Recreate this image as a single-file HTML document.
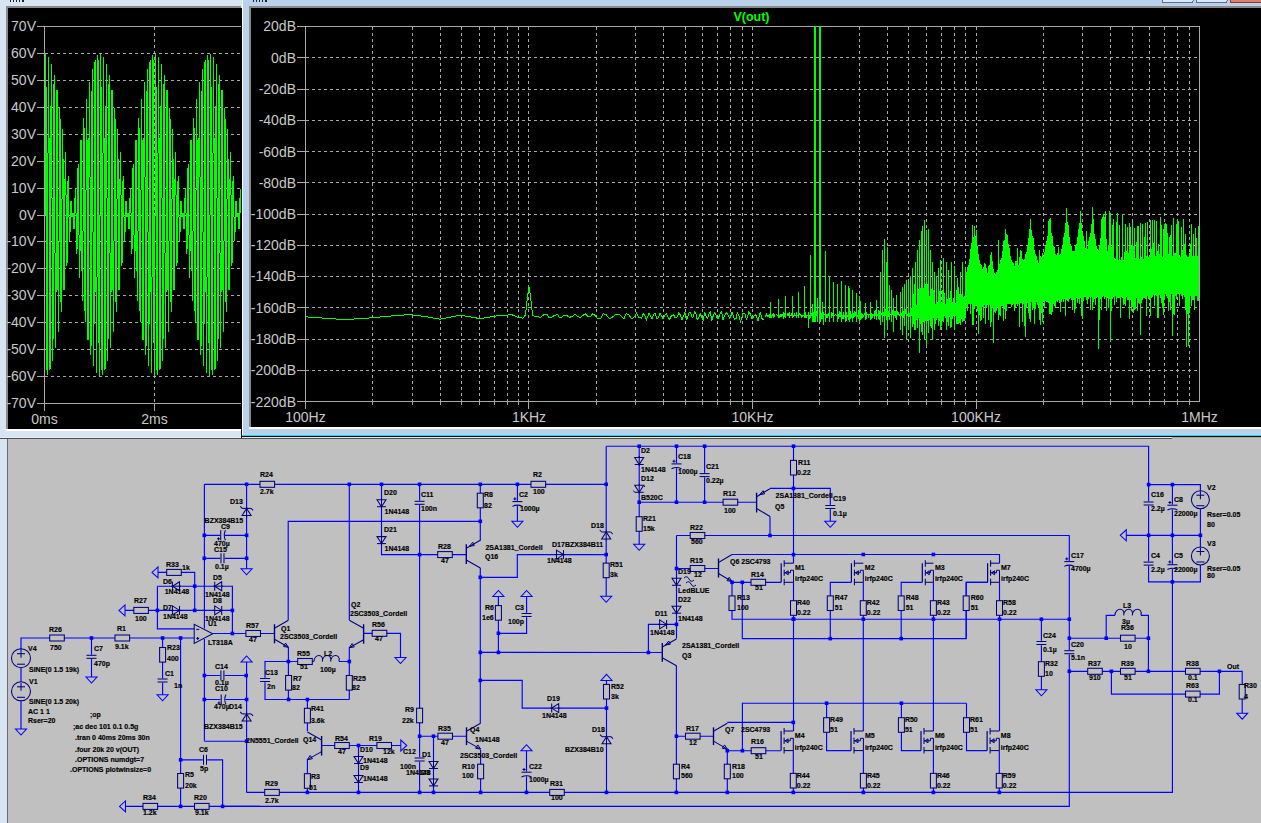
<!DOCTYPE html>
<html><head><meta charset="utf-8"><style>
html,body{margin:0;padding:0;width:1261px;height:823px;overflow:hidden;background:#c0c0c0}
svg{display:block}
.ax{font-family:"Liberation Sans",sans-serif;font-size:14px;fill:#c8c8c8}
.ttl{font-family:"Liberation Sans",sans-serif;font-size:12.5px;font-weight:bold;fill:#00ff00}
.s{font-family:"Liberation Sans",sans-serif;font-size:7px;font-weight:bold;fill:#000;stroke:#000;stroke-width:0.15px}
</style></head><body>
<svg width="1261" height="823" viewBox="0 0 1261 823" shape-rendering="crispEdges">
<defs>
<clipPath id="clipL"><rect x="45" y="8" width="196" height="395"/></clipPath>
<clipPath id="clipR"><rect x="306" y="27" width="893" height="374"/></clipPath>
</defs>
<rect x="0" y="0" width="1261" height="823" fill="#c0c0c0"/><rect x="0" y="0" width="242" height="438" fill="#d7e4f2"/><rect x="6" y="6" width="235" height="2" fill="#8a8a8a"/><rect x="6" y="6" width="2" height="423" fill="#8a8a8a"/><rect x="8" y="8" width="234" height="421" fill="#000"/><rect x="6" y="429" width="236" height="2" fill="#fff"/><rect x="9.5" y="0" width="1.6" height="1.8" fill="#222"/><rect x="12.6" y="0" width="1.6" height="1.8" fill="#222"/><rect x="15.7" y="0" width="1.6" height="1.8" fill="#222"/><rect x="18.8" y="0" width="1.6" height="1.8" fill="#222"/><rect x="21.9" y="0" width="1.6" height="1.8" fill="#222"/><rect x="242" y="0" width="1019" height="436" fill="#b9d1ea"/><rect x="242" y="0" width="1" height="436" fill="#fff"/><rect x="249" y="6" width="1012" height="2" fill="#8a8a8a"/><rect x="249" y="6" width="2" height="421" fill="#8a8a8a"/><rect x="251" y="8" width="1010" height="419" fill="#000"/><rect x="249" y="427" width="1012" height="2" fill="#fff"/><rect x="242" y="435" width="1019" height="1" fill="#2ad3ee"/><rect x="242" y="436" width="1019" height="1" fill="#111"/><rect x="0" y="437" width="1172" height="1" fill="#e6ecf3"/><rect x="0" y="438" width="1172" height="1" fill="#505050"/><rect x="1172" y="437" width="89" height="1" fill="#a8a8a8"/><rect x="241" y="429" width="1" height="9" fill="#111"/><rect x="252.5" y="0" width="1.6" height="1.8" fill="#222"/><rect x="255.6" y="0" width="1.6" height="1.8" fill="#222"/><rect x="258.7" y="0" width="1.6" height="1.8" fill="#222"/><rect x="261.8" y="0" width="1.6" height="1.8" fill="#222"/><rect x="264.9" y="0" width="1.6" height="1.8" fill="#222"/><rect x="1162" y="-6" width="31" height="8.5" rx="2" fill="#dce8f5" stroke="#5a6e88"/><rect x="1196" y="-6" width="31" height="8.5" rx="2" fill="#dce8f5" stroke="#5a6e88"/><rect x="1230" y="-6" width="40" height="8.5" rx="2" fill="#e0806a" stroke="#8a3a2a"/><rect x="0" y="439" width="7" height="384" fill="#d7e4f2"/><rect x="7" y="439" width="1" height="384" fill="#6a6a6a"/>
<g><line x1="37" y1="26.5" x2="241" y2="26.5" stroke="#a8a8a8" stroke-width="1"/><line x1="44.5" y1="26.5" x2="44.5" y2="411" stroke="#a8a8a8" stroke-width="1"/><line x1="37" y1="403.5" x2="241" y2="403.5" stroke="#a8a8a8" stroke-width="1"/><text x="36" y="408" text-anchor="end" class="ax">-70V</text><line x1="37" y1="376.5" x2="44" y2="376.5" stroke="#a8a8a8"/><line x1="45" y1="376.5" x2="241" y2="376.5" stroke="#a8a8a8" stroke-dasharray="3 3"/><text x="36" y="381" text-anchor="end" class="ax">-60V</text><line x1="37" y1="349.5" x2="44" y2="349.5" stroke="#a8a8a8"/><line x1="45" y1="349.5" x2="241" y2="349.5" stroke="#a8a8a8" stroke-dasharray="3 3"/><text x="36" y="354" text-anchor="end" class="ax">-50V</text><line x1="37" y1="322.5" x2="44" y2="322.5" stroke="#a8a8a8"/><line x1="45" y1="322.5" x2="241" y2="322.5" stroke="#a8a8a8" stroke-dasharray="3 3"/><text x="36" y="327" text-anchor="end" class="ax">-40V</text><line x1="37" y1="295.5" x2="44" y2="295.5" stroke="#a8a8a8"/><line x1="45" y1="295.5" x2="241" y2="295.5" stroke="#a8a8a8" stroke-dasharray="3 3"/><text x="36" y="300" text-anchor="end" class="ax">-30V</text><line x1="37" y1="268.5" x2="44" y2="268.5" stroke="#a8a8a8"/><line x1="45" y1="268.5" x2="241" y2="268.5" stroke="#a8a8a8" stroke-dasharray="3 3"/><text x="36" y="273" text-anchor="end" class="ax">-20V</text><line x1="37" y1="241.5" x2="44" y2="241.5" stroke="#a8a8a8"/><line x1="45" y1="241.5" x2="241" y2="241.5" stroke="#a8a8a8" stroke-dasharray="3 3"/><text x="36" y="246" text-anchor="end" class="ax">-10V</text><line x1="37" y1="215.5" x2="44" y2="215.5" stroke="#a8a8a8"/><line x1="45" y1="215.5" x2="241" y2="215.5" stroke="#a8a8a8" stroke-dasharray="3 3"/><text x="36" y="220" text-anchor="end" class="ax">0V</text><line x1="37" y1="188.5" x2="44" y2="188.5" stroke="#a8a8a8"/><line x1="45" y1="188.5" x2="241" y2="188.5" stroke="#a8a8a8" stroke-dasharray="3 3"/><text x="36" y="193" text-anchor="end" class="ax">10V</text><line x1="37" y1="161.5" x2="44" y2="161.5" stroke="#a8a8a8"/><line x1="45" y1="161.5" x2="241" y2="161.5" stroke="#a8a8a8" stroke-dasharray="3 3"/><text x="36" y="166" text-anchor="end" class="ax">20V</text><line x1="37" y1="134.5" x2="44" y2="134.5" stroke="#a8a8a8"/><line x1="45" y1="134.5" x2="241" y2="134.5" stroke="#a8a8a8" stroke-dasharray="3 3"/><text x="36" y="139" text-anchor="end" class="ax">30V</text><line x1="37" y1="107.5" x2="44" y2="107.5" stroke="#a8a8a8"/><line x1="45" y1="107.5" x2="241" y2="107.5" stroke="#a8a8a8" stroke-dasharray="3 3"/><text x="36" y="112" text-anchor="end" class="ax">40V</text><line x1="37" y1="80.5" x2="44" y2="80.5" stroke="#a8a8a8"/><line x1="45" y1="80.5" x2="241" y2="80.5" stroke="#a8a8a8" stroke-dasharray="3 3"/><text x="36" y="85" text-anchor="end" class="ax">50V</text><line x1="37" y1="53.5" x2="44" y2="53.5" stroke="#a8a8a8"/><line x1="45" y1="53.5" x2="241" y2="53.5" stroke="#a8a8a8" stroke-dasharray="3 3"/><text x="36" y="58" text-anchor="end" class="ax">60V</text><text x="36" y="31" text-anchor="end" class="ax">70V</text><line x1="154.5" y1="27" x2="154.5" y2="403" stroke="#a8a8a8" stroke-dasharray="3 3"/><line x1="154.5" y1="403" x2="154.5" y2="411" stroke="#a8a8a8"/><text x="44.5" y="424" text-anchor="middle" class="ax">0ms</text><text x="154.5" y="424" text-anchor="middle" class="ax">2ms</text><path d="M45.5,53.6V215.0M46.5,87.3V370.3M47.5,153.0V375.4M48.5,56.7V153.0M49.5,137.6V370.2M50.5,105.9V368.5M51.5,63.9V198.0M52.5,198.0V361.0M53.5,83.9V339.2M54.5,75.1V253.3M55.5,253.3V348.0M56.5,89.8V291.8M57.5,90.0V290.4M58.5,240.5V331.5M59.5,107.8V240.5M60.5,118.7V302.3M61.5,199.4V312.1M62.5,128.6V199.4M63.5,158.6V290.1M64.5,178.7V290.2M65.5,151.6V195.3M66.5,195.3V266.3M67.5,181.1V262.5M68.5,176.1V216.8M69.5,216.8V241.2M70.5,201.4V232.4M71.5,201.4V217.0M72.5,212.7V217.3M73.5,213.0V228.6M74.5,197.6V228.6M75.5,188.8V213.2M76.5,213.2V253.9M77.5,167.5V248.9M78.5,163.7V234.7M79.5,234.7V278.4M80.5,139.8V251.3M81.5,139.9V271.4M82.5,230.6V301.4M83.5,117.9V230.6M84.5,127.7V311.3M85.5,189.5V322.2M86.5,98.5V189.5M87.5,139.6V340.0M88.5,138.2V340.2M89.5,82.0V176.7M90.5,176.7V354.9M91.5,90.8V346.1M92.5,69.0V232.0M93.5,232.0V366.1M94.5,61.5V324.1M95.5,59.8V292.4M96.5,277.0V373.3M97.5,54.6V277.0M98.5,59.7V342.7M99.5,215.0V376.4M100.5,53.6V215.0M101.5,87.3V370.3M102.5,153.0V375.4M103.5,56.7V153.0M104.5,137.6V370.2M105.5,105.9V368.5M106.5,63.9V198.0M107.5,198.0V361.0M108.5,83.9V339.2M109.5,75.1V253.3M110.5,253.3V348.0M111.5,89.8V291.8M112.5,90.0V290.4M113.5,240.5V331.5M114.5,107.8V240.5M115.5,118.7V302.3M116.5,199.4V312.1M117.5,128.6V199.4M118.5,158.6V290.1M119.5,178.7V290.2M120.5,151.6V195.3M121.5,195.3V266.3M122.5,181.1V262.5M123.5,176.1V216.8M124.5,216.8V241.2M125.5,201.4V232.4M126.5,201.4V217.0M127.5,212.7V217.3M128.5,213.0V228.6M129.5,197.6V228.6M130.5,188.8V213.2M131.5,213.2V253.9M132.5,167.5V248.9M133.5,163.7V234.7M134.5,234.7V278.4M135.5,139.8V251.3M136.5,139.9V271.4M137.5,230.6V301.4M138.5,117.9V230.6M139.5,127.7V311.3M140.5,189.5V322.2M141.5,98.5V189.5M142.5,139.6V340.0M143.5,138.2V340.2M144.5,82.0V176.7M145.5,176.7V354.9M146.5,90.8V346.1M147.5,69.0V232.0M148.5,232.0V366.1M149.5,61.5V324.1M150.5,59.8V292.4M151.5,277.0V373.3M152.5,54.6V277.0M153.5,59.7V342.7M154.5,215.0V376.4M155.5,53.6V215.0M156.5,87.3V370.3M157.5,153.0V375.4M158.5,56.7V153.0M159.5,137.6V370.2M160.5,105.9V368.5M161.5,63.9V198.0M162.5,198.0V361.0M163.5,83.9V339.2M164.5,75.1V253.3M165.5,253.3V348.0M166.5,89.8V291.8M167.5,90.0V290.4M168.5,240.5V331.5M169.5,107.8V240.5M170.5,118.7V302.3M171.5,199.4V312.1M172.5,128.6V199.4M173.5,158.6V290.1M174.5,178.7V290.2M175.5,151.6V195.3M176.5,195.3V266.3M177.5,181.1V262.5M178.5,176.1V216.8M179.5,216.8V241.2M180.5,201.4V232.4M181.5,201.4V217.0M182.5,212.7V217.3M183.5,213.0V228.6M184.5,197.6V228.6M185.5,188.8V213.2M186.5,213.2V253.9M187.5,167.5V248.9M188.5,163.7V234.7M189.5,234.7V278.4M190.5,139.8V251.3M191.5,139.9V271.4M192.5,230.6V301.4M193.5,117.9V230.6M194.5,127.7V311.3M195.5,189.5V322.2M196.5,98.5V189.5M197.5,139.6V340.0M198.5,138.2V340.2M199.5,82.0V176.7M200.5,176.7V354.9M201.5,90.8V346.1M202.5,69.0V232.0M203.5,232.0V366.1M204.5,61.5V324.1M205.5,59.8V292.4M206.5,277.0V373.3M207.5,54.6V277.0M208.5,59.7V342.7M209.5,215.0V376.4M210.5,53.6V215.0M211.5,87.3V370.3M212.5,153.0V375.4M213.5,56.7V153.0M214.5,137.6V370.2M215.5,105.9V368.5M216.5,63.9V198.0M217.5,198.0V361.0M218.5,83.9V339.2M219.5,75.1V253.3M220.5,253.3V348.0M221.5,89.8V291.8M222.5,90.0V290.4M223.5,240.5V331.5M224.5,107.8V240.5M225.5,118.7V302.3M226.5,199.4V312.1M227.5,128.6V199.4M228.5,158.6V290.1M229.5,178.7V290.2M230.5,151.6V195.3M231.5,195.3V266.3M232.5,181.1V262.5M233.5,176.1V216.8M234.5,216.8V241.2M235.5,201.4V232.4M236.5,201.4V217.0M237.5,212.7V217.3M238.5,213.0V228.6M239.5,197.6V228.6M240.5,188.8V213.2M241.5,213.2V253.9" fill="none" stroke="#00ff00" stroke-width="1" clip-path="url(#clipL)"/></g>
<g><line x1="297" y1="26.5" x2="1200" y2="26.5" stroke="#a8a8a8"/><line x1="1199.5" y1="26.5" x2="1199.5" y2="401.5" stroke="#a8a8a8"/><line x1="297" y1="401.5" x2="1200" y2="401.5" stroke="#a8a8a8"/><line x1="305.5" y1="26.5" x2="305.5" y2="409" stroke="#a8a8a8"/><text x="296" y="31" text-anchor="end" class="ax">20dB</text><line x1="297" y1="57.5" x2="305" y2="57.5" stroke="#a8a8a8"/><line x1="306" y1="57.5" x2="1199" y2="57.5" stroke="#a8a8a8" stroke-dasharray="3 3"/><text x="296" y="63" text-anchor="end" class="ax">0dB</text><line x1="297" y1="89.5" x2="305" y2="89.5" stroke="#a8a8a8"/><line x1="306" y1="89.5" x2="1199" y2="89.5" stroke="#a8a8a8" stroke-dasharray="3 3"/><text x="296" y="94" text-anchor="end" class="ax">-20dB</text><line x1="297" y1="120.5" x2="305" y2="120.5" stroke="#a8a8a8"/><line x1="306" y1="120.5" x2="1199" y2="120.5" stroke="#a8a8a8" stroke-dasharray="3 3"/><text x="296" y="125" text-anchor="end" class="ax">-40dB</text><line x1="297" y1="151.5" x2="305" y2="151.5" stroke="#a8a8a8"/><line x1="306" y1="151.5" x2="1199" y2="151.5" stroke="#a8a8a8" stroke-dasharray="3 3"/><text x="296" y="157" text-anchor="end" class="ax">-60dB</text><line x1="297" y1="182.5" x2="305" y2="182.5" stroke="#a8a8a8"/><line x1="306" y1="182.5" x2="1199" y2="182.5" stroke="#a8a8a8" stroke-dasharray="3 3"/><text x="296" y="188" text-anchor="end" class="ax">-80dB</text><line x1="297" y1="214.5" x2="305" y2="214.5" stroke="#a8a8a8"/><line x1="306" y1="214.5" x2="1199" y2="214.5" stroke="#a8a8a8" stroke-dasharray="3 3"/><text x="296" y="219" text-anchor="end" class="ax">-100dB</text><line x1="297" y1="245.5" x2="305" y2="245.5" stroke="#a8a8a8"/><line x1="306" y1="245.5" x2="1199" y2="245.5" stroke="#a8a8a8" stroke-dasharray="3 3"/><text x="296" y="250" text-anchor="end" class="ax">-120dB</text><line x1="297" y1="276.5" x2="305" y2="276.5" stroke="#a8a8a8"/><line x1="306" y1="276.5" x2="1199" y2="276.5" stroke="#a8a8a8" stroke-dasharray="3 3"/><text x="296" y="281" text-anchor="end" class="ax">-140dB</text><line x1="297" y1="307.5" x2="305" y2="307.5" stroke="#a8a8a8"/><line x1="306" y1="307.5" x2="1199" y2="307.5" stroke="#a8a8a8" stroke-dasharray="3 3"/><text x="296" y="313" text-anchor="end" class="ax">-160dB</text><line x1="297" y1="339.5" x2="305" y2="339.5" stroke="#a8a8a8"/><line x1="306" y1="339.5" x2="1199" y2="339.5" stroke="#a8a8a8" stroke-dasharray="3 3"/><text x="296" y="344" text-anchor="end" class="ax">-180dB</text><line x1="297" y1="370.5" x2="305" y2="370.5" stroke="#a8a8a8"/><line x1="306" y1="370.5" x2="1199" y2="370.5" stroke="#a8a8a8" stroke-dasharray="3 3"/><text x="296" y="375" text-anchor="end" class="ax">-200dB</text><text x="296" y="407" text-anchor="end" class="ax">-220dB</text><line x1="372.5" y1="27" x2="372.5" y2="401" stroke="#a8a8a8" stroke-dasharray="3 3"/><line x1="372.5" y1="401" x2="372.5" y2="405" stroke="#a8a8a8"/><line x1="412.5" y1="27" x2="412.5" y2="401" stroke="#a8a8a8" stroke-dasharray="3 3"/><line x1="412.5" y1="401" x2="412.5" y2="405" stroke="#a8a8a8"/><line x1="440.5" y1="27" x2="440.5" y2="401" stroke="#a8a8a8" stroke-dasharray="3 3"/><line x1="440.5" y1="401" x2="440.5" y2="405" stroke="#a8a8a8"/><line x1="461.5" y1="27" x2="461.5" y2="401" stroke="#a8a8a8" stroke-dasharray="3 3"/><line x1="461.5" y1="401" x2="461.5" y2="405" stroke="#a8a8a8"/><line x1="479.5" y1="27" x2="479.5" y2="401" stroke="#a8a8a8" stroke-dasharray="3 3"/><line x1="479.5" y1="401" x2="479.5" y2="405" stroke="#a8a8a8"/><line x1="494.5" y1="27" x2="494.5" y2="401" stroke="#a8a8a8" stroke-dasharray="3 3"/><line x1="494.5" y1="401" x2="494.5" y2="405" stroke="#a8a8a8"/><line x1="507.5" y1="27" x2="507.5" y2="401" stroke="#a8a8a8" stroke-dasharray="3 3"/><line x1="507.5" y1="401" x2="507.5" y2="405" stroke="#a8a8a8"/><line x1="518.5" y1="27" x2="518.5" y2="401" stroke="#a8a8a8" stroke-dasharray="3 3"/><line x1="518.5" y1="401" x2="518.5" y2="405" stroke="#a8a8a8"/><line x1="528.5" y1="27" x2="528.5" y2="401" stroke="#a8a8a8" stroke-dasharray="3 3"/><line x1="528.5" y1="401" x2="528.5" y2="409" stroke="#a8a8a8"/><line x1="596.5" y1="27" x2="596.5" y2="401" stroke="#a8a8a8" stroke-dasharray="3 3"/><line x1="596.5" y1="401" x2="596.5" y2="405" stroke="#a8a8a8"/><line x1="635.5" y1="27" x2="635.5" y2="401" stroke="#a8a8a8" stroke-dasharray="3 3"/><line x1="635.5" y1="401" x2="635.5" y2="405" stroke="#a8a8a8"/><line x1="663.5" y1="27" x2="663.5" y2="401" stroke="#a8a8a8" stroke-dasharray="3 3"/><line x1="663.5" y1="401" x2="663.5" y2="405" stroke="#a8a8a8"/><line x1="685.5" y1="27" x2="685.5" y2="401" stroke="#a8a8a8" stroke-dasharray="3 3"/><line x1="685.5" y1="401" x2="685.5" y2="405" stroke="#a8a8a8"/><line x1="702.5" y1="27" x2="702.5" y2="401" stroke="#a8a8a8" stroke-dasharray="3 3"/><line x1="702.5" y1="401" x2="702.5" y2="405" stroke="#a8a8a8"/><line x1="717.5" y1="27" x2="717.5" y2="401" stroke="#a8a8a8" stroke-dasharray="3 3"/><line x1="717.5" y1="401" x2="717.5" y2="405" stroke="#a8a8a8"/><line x1="730.5" y1="27" x2="730.5" y2="401" stroke="#a8a8a8" stroke-dasharray="3 3"/><line x1="730.5" y1="401" x2="730.5" y2="405" stroke="#a8a8a8"/><line x1="742.5" y1="27" x2="742.5" y2="401" stroke="#a8a8a8" stroke-dasharray="3 3"/><line x1="742.5" y1="401" x2="742.5" y2="405" stroke="#a8a8a8"/><line x1="752.5" y1="27" x2="752.5" y2="401" stroke="#a8a8a8" stroke-dasharray="3 3"/><line x1="752.5" y1="401" x2="752.5" y2="409" stroke="#a8a8a8"/><line x1="819.5" y1="27" x2="819.5" y2="401" stroke="#a8a8a8" stroke-dasharray="3 3"/><line x1="819.5" y1="401" x2="819.5" y2="405" stroke="#a8a8a8"/><line x1="859.5" y1="27" x2="859.5" y2="401" stroke="#a8a8a8" stroke-dasharray="3 3"/><line x1="859.5" y1="401" x2="859.5" y2="405" stroke="#a8a8a8"/><line x1="887.5" y1="27" x2="887.5" y2="401" stroke="#a8a8a8" stroke-dasharray="3 3"/><line x1="887.5" y1="401" x2="887.5" y2="405" stroke="#a8a8a8"/><line x1="908.5" y1="27" x2="908.5" y2="401" stroke="#a8a8a8" stroke-dasharray="3 3"/><line x1="908.5" y1="401" x2="908.5" y2="405" stroke="#a8a8a8"/><line x1="926.5" y1="27" x2="926.5" y2="401" stroke="#a8a8a8" stroke-dasharray="3 3"/><line x1="926.5" y1="401" x2="926.5" y2="405" stroke="#a8a8a8"/><line x1="941.5" y1="27" x2="941.5" y2="401" stroke="#a8a8a8" stroke-dasharray="3 3"/><line x1="941.5" y1="401" x2="941.5" y2="405" stroke="#a8a8a8"/><line x1="954.5" y1="27" x2="954.5" y2="401" stroke="#a8a8a8" stroke-dasharray="3 3"/><line x1="954.5" y1="401" x2="954.5" y2="405" stroke="#a8a8a8"/><line x1="965.5" y1="27" x2="965.5" y2="401" stroke="#a8a8a8" stroke-dasharray="3 3"/><line x1="965.5" y1="401" x2="965.5" y2="405" stroke="#a8a8a8"/><line x1="976.5" y1="27" x2="976.5" y2="401" stroke="#a8a8a8" stroke-dasharray="3 3"/><line x1="976.5" y1="401" x2="976.5" y2="409" stroke="#a8a8a8"/><line x1="1043.5" y1="27" x2="1043.5" y2="401" stroke="#a8a8a8" stroke-dasharray="3 3"/><line x1="1043.5" y1="401" x2="1043.5" y2="405" stroke="#a8a8a8"/><line x1="1082.5" y1="27" x2="1082.5" y2="401" stroke="#a8a8a8" stroke-dasharray="3 3"/><line x1="1082.5" y1="401" x2="1082.5" y2="405" stroke="#a8a8a8"/><line x1="1110.5" y1="27" x2="1110.5" y2="401" stroke="#a8a8a8" stroke-dasharray="3 3"/><line x1="1110.5" y1="401" x2="1110.5" y2="405" stroke="#a8a8a8"/><line x1="1132.5" y1="27" x2="1132.5" y2="401" stroke="#a8a8a8" stroke-dasharray="3 3"/><line x1="1132.5" y1="401" x2="1132.5" y2="405" stroke="#a8a8a8"/><line x1="1149.5" y1="27" x2="1149.5" y2="401" stroke="#a8a8a8" stroke-dasharray="3 3"/><line x1="1149.5" y1="401" x2="1149.5" y2="405" stroke="#a8a8a8"/><line x1="1164.5" y1="27" x2="1164.5" y2="401" stroke="#a8a8a8" stroke-dasharray="3 3"/><line x1="1164.5" y1="401" x2="1164.5" y2="405" stroke="#a8a8a8"/><line x1="1177.5" y1="27" x2="1177.5" y2="401" stroke="#a8a8a8" stroke-dasharray="3 3"/><line x1="1177.5" y1="401" x2="1177.5" y2="405" stroke="#a8a8a8"/><line x1="1189.5" y1="27" x2="1189.5" y2="401" stroke="#a8a8a8" stroke-dasharray="3 3"/><line x1="1189.5" y1="401" x2="1189.5" y2="405" stroke="#a8a8a8"/><text x="305.5" y="422" text-anchor="middle" class="ax">100Hz</text><text x="529.0" y="422" text-anchor="middle" class="ax">1KHz</text><text x="752.5" y="422" text-anchor="middle" class="ax">10KHz</text><text x="976.0" y="422" text-anchor="middle" class="ax">100KHz</text><text x="1199.5" y="422" text-anchor="middle" class="ax">1MHz</text><text x="751.5" y="21" text-anchor="middle" class="ttl">V(out)</text><polyline points="305.5,316.8 330.0,318.6 345.0,319.6 372.0,317.8 395.0,315.6 410.0,314.6 425.0,316.5 440.0,319.2 460.0,315.2 480.0,318.6 500.0,315.4 512.0,314.8 518.0,317.5 523.0,318.2 525.5,315.0 527.5,296.0 529.0,286.5 530.5,296.0 532.5,315.0 535.0,316.6 537.0,316.0 540.2,317.6 543.6,314.9 547.0,314.6 549.2,317.6 552.0,317.2 554.3,315.4 557.5,314.6 559.7,317.8 561.7,317.5 564.0,315.3 566.4,315.1 569.4,317.5 572.5,316.2 574.9,314.1 577.1,316.0 580.0,317.7 582.5,315.5 585.3,314.0 588.3,316.9 590.4,317.0 592.4,314.0 595.3,315.4 597.5,318.5 600.7,318.4 603.2,313.6 606.3,314.8 609.5,318.9 613.0,316.6 615.9,314.5 619.3,314.2 621.7,316.9 624.0,318.9 626.2,313.5 629.0,315.2 631.9,318.9 634.5,316.7 636.6,313.2 638.8,317.5 641.7,318.1 643.1,313.9 644.4,314.3 646.3,319.9 647.8,316.4 649.1,312.8 650.5,315.9 652.1,319.0 653.2,315.4 655.0,312.9 656.8,318.6 658.6,317.4 659.9,313.0 661.5,315.7 663.2,318.7 664.7,315.2 666.2,313.7 668.0,317.2 669.7,319.2 671.6,315.2 673.6,314.8 675.1,317.7 677.0,316.9 678.7,313.2 680.5,314.9 681.9,319.7 683.6,315.9 684.7,312.6 686.0,316.1 687.0,319.4 688.1,315.8 689.2,312.0 690.7,312.8 692.3,317.8 693.3,316.7 694.7,311.9 696.1,314.4 697.2,319.7 698.8,317.6 700.2,313.5 701.5,316.8 703.1,320.2 704.7,312.1 705.7,315.5 707.3,318.5 709.2,313.9 710.4,312.0 711.8,320.6 713.4,315.3 714.9,312.6 716.9,317.5 718.4,318.6 719.8,314.0 721.7,311.5 722.9,320.2 724.2,316.8 726.2,312.6 727.6,314.1 729.4,318.2 730.7,316.7 732.0,312.3 733.3,315.5 734.4,319.1 736.3,318.2 737.3,313.0 738.9,316.0 740.4,321.6 741.8,317.7 743.0,313.5 744.9,313.4 746.2,319.3 747.3,317.8 748.8,311.5 750.4,314.2 751.6,318.5 753.3,317.5 755.3,314.3 756.3,316.0 758.0,321.3 759.1,316.6 760.2,312.2 761.4,317.0 762.5,319.6 763.6,319.7" fill="none" stroke="#00ff00" stroke-width="1"/><line x1="815" y1="26" x2="815" y2="322" stroke="#00ff00" stroke-width="2"/><line x1="820" y1="26" x2="820" y2="322" stroke="#00ff00" stroke-width="2"/><path d="M765.5,314.7V316.7M766.5,313.2V316.4M767.5,314.6V316.7M768.5,315.3V316.5M769.5,314.2V317.5M770.5,315.4V315.9M771.5,315.4V317.6M772.5,313.9V315.5M773.5,312.8V318.2M774.5,314.0V316.9M775.5,315.2V315.4M776.5,314.3V315.4M777.5,315.1V315.7M778.5,315.4V316.4M779.5,314.5V317.8M780.5,314.3V317.0M781.5,314.3V317.1M782.5,314.4V315.8M783.5,312.4V318.5M784.5,313.0V317.3M785.5,314.8V315.7M786.5,314.8V315.4M787.5,313.2V316.1M788.5,312.9V316.1M789.5,312.4V317.9M790.5,315.2V315.6M791.5,312.5V316.4M792.5,312.1V316.1M793.5,315.2V317.0M794.5,313.0V315.7M795.5,315.1V315.9M796.5,312.1V317.6M797.5,315.0V315.6M798.5,315.1V315.2M799.5,312.8V315.4M800.5,313.7V316.3M801.5,314.9V317.5M802.5,315.0V317.1M803.5,315.0V316.2M804.5,314.8V315.6M805.5,311.8V317.9M806.5,314.5V318.3M807.5,314.7V316.0M808.5,312.2V317.1M809.5,314.9V319.0M810.5,314.7V315.6M811.5,312.6V315.8M812.5,314.4V315.1M813.5,314.9V316.8M814.5,314.6V316.9M815.5,314.2V316.3M816.5,311.4V316.4M817.5,313.3V318.4M818.5,314.7V315.2M819.5,311.6V318.1M820.5,314.5V315.3M821.5,312.5V318.9M822.5,314.6V318.9M823.5,311.6V317.0M824.5,313.8V315.1M825.5,314.9V319.1M826.5,314.4V317.5M827.5,314.4V318.2M828.5,313.0V315.6M829.5,314.6V317.6M830.5,314.8V315.3M831.5,313.1V318.4M832.5,312.8V315.5M833.5,311.1V315.2M834.5,314.8V315.5M835.5,313.5V314.9M836.5,314.5V315.8M837.5,312.9V315.0M838.5,313.8V318.8M839.5,310.5V317.3M840.5,312.2V316.9M841.5,314.5V314.8M842.5,314.7V319.0M843.5,312.1V319.3M844.5,314.7V317.2M845.5,313.2V317.8M846.5,313.9V319.7M847.5,314.6V316.7M848.5,311.8V319.0M849.5,311.7V317.6M850.5,311.4V319.1M851.5,313.7V317.5M852.5,310.6V318.8M853.5,313.4V318.3M854.5,310.8V316.9M855.5,312.3V315.8M856.5,312.5V317.1M857.5,314.5V317.3M858.5,309.8V318.9M859.5,311.5V315.9M860.5,311.5V316.9M861.5,313.1V318.7M862.5,314.4V318.1M863.5,314.5V317.1M864.5,312.9V315.1M865.5,311.6V316.4M866.5,312.1V319.4M867.5,313.8V314.5M868.5,313.6V317.6M869.5,314.0V314.9M870.5,310.0V317.5M871.5,312.9V319.2M872.5,313.5V317.5M873.5,314.0V316.0M874.5,310.6V319.4M875.5,310.1V315.8M876.5,312.0V315.4M877.5,314.1V316.4M878.5,310.3V318.9M879.5,311.2V319.8M880.5,313.6V314.8M881.5,312.7V315.2M882.5,313.8V315.9M883.5,311.6V316.4M884.5,313.3V318.9M885.5,308.9V316.1M886.5,314.2V314.3M887.5,309.8V314.3M888.5,310.9V316.9M889.5,313.3V318.6M890.5,314.2V314.6M891.5,312.5V314.3M892.5,309.9V315.0M893.5,313.9V314.3M894.5,311.4V316.1M895.5,311.3V317.6M896.5,310.0V320.2M897.5,310.9V314.7M898.5,312.3V314.7M899.5,314.2V316.2M900.5,310.6V314.6M901.5,313.3V315.5M902.5,310.7V316.6M903.5,311.3V318.4M904.5,312.6V318.7M905.5,308.9V314.3M906.5,308.7V318.2M907.5,313.8V316.1M908.5,311.1V319.9M909.5,312.6V316.9M910.5,309.0V318.8M911.5,308.4V316.2M912.5,310.8V314.7M913.5,293.7V324.2M914.5,283.6V329.5M915.5,301.0V327.9M916.5,304.5V320.3M917.5,297.5V318.6M918.5,289.3V318.4M919.5,303.8V318.8M920.5,288.1V323.7M921.5,284.7V318.1M922.5,301.6V324.4M923.5,288.0V321.8M924.5,287.9V327.7M925.5,284.0V321.3M926.5,296.4V321.0M927.5,284.0V321.2M928.5,295.7V320.9M929.5,296.3V320.1M930.5,301.9V320.7M931.5,288.8V327.7M932.5,303.2V322.6M933.5,289.9V318.0M934.5,292.5V319.2M935.5,304.3V324.4M936.5,302.9V316.5M937.5,301.5V318.1M938.5,303.2V320.8M939.5,291.0V320.5M940.5,294.1V323.9M941.5,302.2V326.2M942.5,289.8V321.3M943.5,302.8V318.5M944.5,292.8V316.2M945.5,304.0V318.1M946.5,287.1V320.4M947.5,299.4V321.6M948.5,303.8V316.0M949.5,298.2V316.5M950.5,291.3V327.8M951.5,303.9V326.9M952.5,302.1V318.9M953.5,297.5V316.0M954.5,303.4V319.8M955.5,303.3V316.3M956.5,289.6V323.7M957.5,296.9V320.0M958.5,286.6V323.8M959.5,294.0V323.3M960.5,289.5V325.3M961.5,293.5V319.0M962.5,301.9V318.6M963.5,296.7V320.7M964.5,296.0V321.1M965.5,298.9V317.8M770.5,302.0V318.0M778.5,299.0V318.0M785.5,296.0V318.0M792.5,296.0V318.0M798.5,292.0V318.0M804.5,286.0V318.0M810.5,255.0V318.0M825.5,251.0V322.0M829.5,276.0V322.0M833.5,282.0V322.0M837.5,284.0V322.0M841.5,285.0V322.0M845.5,286.0V322.0M849.5,288.0V322.0M852.5,291.0V322.0M856.5,293.0V322.0M859.5,296.0V322.0M808.5,312.0V328.0M813.5,312.0V322.0M823.5,312.0V325.0M831.5,312.0V318.0M846.5,312.0V321.0M841.5,281.0V320.0M845.5,285.0V320.0M848.5,286.0V320.0M852.5,290.0V320.0M856.5,293.0V320.0M860.5,301.0V320.0M865.5,303.0V320.0M870.5,302.0V320.0M876.5,300.0V320.0M880.5,272.0V325.0M882.5,250.0V322.0M884.5,239.0V338.0M886.5,262.0V320.0M887.5,247.0V330.0M889.5,285.0V320.0M891.5,290.0V322.0M893.5,298.0V332.0M896.5,295.0V320.0M900.5,292.0V330.0M902.5,287.0V335.0M904.5,284.0V326.0M906.5,280.0V340.0M908.5,282.0V330.0M910.5,276.0V338.0M912.5,268.0V327.0M915.5,262.0V330.0M917.5,250.0V328.0M919.5,240.0V353.0M921.5,231.0V332.0M922.5,226.0V335.0M924.5,219.6V340.0M926.5,230.0V345.0M928.5,229.0V333.0M930.5,250.0V326.0M932.5,262.0V340.0M934.5,272.0V330.0M936.5,276.0V320.0M938.5,268.0V326.0M940.5,260.0V330.0M943.5,258.0V322.0M946.5,262.0V330.0M948.5,270.0V326.0M951.5,262.0V322.0M954.5,266.0V330.0M957.5,278.0V324.0M960.5,272.0V318.0M962.5,262.0V322.0M812.5,304.0V322.0M817.5,298.0V322.0M822.5,302.0V318.0M965.5,268.0V304.0M966.5,272.2V306.8M967.5,267.4V311.0M968.5,265.2V304.1M969.5,259.1V304.2M970.5,248.7V313.6M971.5,243.0V304.2M972.5,225.3V325.4M973.5,236.8V325.0M974.5,225.8V308.5M975.5,236.3V305.5M976.5,229.9V305.3M977.5,245.9V311.2M978.5,253.8V334.4M979.5,260.3V314.6M980.5,264.0V320.7M981.5,265.3V319.5M982.5,269.3V307.2M983.5,267.4V318.2M984.5,263.1V304.9M985.5,263.7V324.2M986.5,268.1V307.2M987.5,272.8V305.2M988.5,265.5V319.5M989.5,264.8V305.0M990.5,254.5V327.1M991.5,251.8V321.7M992.5,261.4V308.3M993.5,268.5V343.3M994.5,272.8V312.2M995.5,273.5V312.5M996.5,271.6V311.3M997.5,269.7V307.2M998.5,239.7V319.7M999.5,263.7V314.5M1000.5,260.4V316.4M1001.5,257.9V306.1M1002.5,250.6V306.1M1003.5,241.0V321.3M1004.5,240.4V309.4M1005.5,228.9V318.8M1006.5,234.0V310.7M1007.5,235.4V304.4M1008.5,243.6V304.4M1009.5,248.0V304.2M1010.5,256.4V304.1M1011.5,260.0V306.8M1012.5,262.3V304.6M1013.5,263.1V303.9M1014.5,265.5V311.3M1015.5,260.9V307.3M1016.5,260.9V303.5M1017.5,248.2V305.7M1018.5,265.0V303.7M1019.5,256.8V326.5M1020.5,249.6V303.2M1021.5,250.9V303.3M1022.5,259.3V322.4M1023.5,259.5V303.9M1024.5,258.7V326.1M1025.5,254.4V337.4M1026.5,252.3V308.2M1027.5,245.8V302.8M1028.5,237.9V313.0M1029.5,229.0V318.5M1030.5,218.8V321.5M1031.5,229.5V302.1M1032.5,235.6V309.6M1033.5,237.9V307.7M1034.5,250.1V324.1M1035.5,254.1V308.6M1036.5,256.3V301.6M1037.5,260.3V304.7M1038.5,262.8V306.6M1039.5,249.7V320.2M1040.5,255.6V325.0M1041.5,256.8V313.0M1042.5,252.6V321.9M1043.5,256.0V301.5M1044.5,252.2V308.4M1045.5,246.2V300.9M1046.5,241.2V302.2M1047.5,236.0V302.0M1048.5,220.9V303.4M1049.5,218.6V314.4M1050.5,217.8V314.2M1051.5,233.0V314.5M1052.5,236.3V311.6M1053.5,245.7V303.8M1054.5,247.4V306.2M1055.5,253.6V308.2M1056.5,255.0V300.9M1057.5,253.1V302.2M1058.5,246.5V299.9M1059.5,255.4V302.5M1060.5,253.5V311.5M1061.5,249.2V301.9M1062.5,245.2V299.2M1063.5,237.0V302.1M1064.5,232.7V299.4M1065.5,223.4V316.2M1066.5,208.2V300.1M1067.5,221.8V301.2M1068.5,225.2V301.5M1069.5,236.9V298.5M1070.5,243.8V298.4M1071.5,245.8V299.6M1072.5,250.7V309.6M1073.5,251.4V300.4M1074.5,250.9V313.1M1075.5,246.0V308.5M1076.5,243.8V298.0M1077.5,237.4V302.9M1078.5,229.2V298.7M1079.5,222.6V304.1M1080.5,211.1V297.5M1081.5,222.8V316.0M1082.5,232.6V319.0M1083.5,235.8V300.6M1084.5,241.1V297.1M1085.5,247.6V297.4M1086.5,231.1V300.1M1087.5,249.3V303.7M1088.5,241.3V298.8M1089.5,237.4V297.3M1090.5,233.2V309.5M1091.5,224.2V297.0M1092.5,207.4V310.3M1093.5,219.4V302.1M1094.5,233.9V298.8M1095.5,239.2V305.1M1096.5,246.3V297.6M1097.5,248.8V296.9M1098.5,249.9V348.8M1099.5,245.8V320.2M1100.5,238.3V299.2M1101.5,219.0V309.8M1102.5,216.6V296.9M1103.5,214.4V296.4M1104.5,217.0V299.0M1105.5,210.7V296.9M1106.5,239.0V311.2M1107.5,250.6V297.7M1108.5,244.8V308.0M1109.5,210.9V298.7M1110.5,213.2V342.0M1111.5,246.8V310.9M1112.5,225.2V299.3M1113.5,219.3V296.9M1114.5,258.0V304.9M1115.5,259.1V296.1M1116.5,222.2V302.3M1117.5,212.6V298.3M1118.5,260.3V297.8M1119.5,224.6V297.8M1120.5,260.0V317.8M1121.5,257.0V297.1M1122.5,213.7V298.2M1123.5,259.7V304.8M1124.5,252.4V304.3M1125.5,224.4V306.2M1126.5,250.9V296.5M1127.5,227.2V299.6M1128.5,252.7V300.0M1129.5,223.1V318.9M1130.5,227.2V300.4M1131.5,244.6V311.3M1132.5,222.1V306.7M1133.5,245.7V312.8M1134.5,228.3V309.5M1135.5,258.4V308.8M1136.5,241.6V297.8M1137.5,225.8V311.3M1138.5,225.6V303.4M1139.5,259.1V303.8M1140.5,222.9V334.6M1141.5,257.3V302.9M1142.5,223.5V299.5M1143.5,258.8V297.5M1144.5,237.1V297.5M1145.5,222.7V298.5M1146.5,255.7V315.9M1147.5,222.0V296.3M1148.5,257.3V299.0M1149.5,255.9V298.9M1150.5,220.1V316.4M1151.5,248.6V298.1M1152.5,220.0V296.9M1153.5,243.0V294.8M1154.5,219.6V306.3M1155.5,256.2V294.5M1156.5,221.3V296.4M1157.5,250.9V318.1M1158.5,243.6V318.3M1159.5,254.1V295.2M1160.5,216.7V297.5M1161.5,225.0V302.8M1162.5,256.9V308.0M1163.5,228.6V315.4M1164.5,223.6V300.3M1165.5,223.3V294.4M1166.5,223.5V295.8M1167.5,233.3V298.3M1168.5,253.7V310.9M1169.5,237.0V302.2M1170.5,234.5V309.5M1171.5,224.5V294.0M1172.5,255.9V336.1M1173.5,218.1V313.8M1174.5,252.8V315.1M1175.5,252.5V295.5M1176.5,223.6V298.5M1177.5,220.4V293.8M1178.5,220.6V293.9M1179.5,255.3V306.4M1180.5,257.0V293.7M1181.5,227.0V296.3M1182.5,249.5V298.8M1183.5,219.2V294.7M1184.5,243.5V296.8M1185.5,233.7V309.5M1186.5,254.9V347.4M1187.5,256.6V313.7M1188.5,256.6V346.4M1189.5,253.3V313.2M1190.5,243.7V296.1M1191.5,224.0V305.5M1192.5,256.2V299.6M1193.5,234.4V299.9M1194.5,255.5V309.5M1195.5,227.6V296.0M1196.5,237.5V296.1M1197.5,255.9V300.5M1198.5,225.5V300.6M1199.5,253.3V295.5" fill="none" stroke="#00ff00" stroke-width="1" clip-path="url(#clipR)"/></g>
<g shape-rendering="auto"><polyline points="21,650 21,638 194.2,638" fill="none" stroke="#0000ff" stroke-width="1.15"/><polyline points="21,667.7 21,681.8" fill="none" stroke="#0000ff" stroke-width="1.15"/><polyline points="21,700.8 21,729" fill="none" stroke="#0000ff" stroke-width="1.15"/><polyline points="91.5,638 91.5,677" fill="none" stroke="#0000ff" stroke-width="1.15"/><polyline points="162.6,638 162.6,694.8" fill="none" stroke="#0000ff" stroke-width="1.15"/><polyline points="180.6,638 180.6,806.4" fill="none" stroke="#0000ff" stroke-width="1.15"/><polyline points="180.6,759.8 222.6,759.8 222.6,806.4" fill="none" stroke="#0000ff" stroke-width="1.15"/><polyline points="125.5,806.4 260,806.4" fill="none" stroke="#0000ff" stroke-width="1.15"/><polyline points="125,610.4 232.4,610.4" fill="none" stroke="#0000ff" stroke-width="1.15"/><polyline points="158,572.4 194.7,572.4 194.7,610.4" fill="none" stroke="#0000ff" stroke-width="1.15"/><polyline points="157.4,586.2 232.4,586.2 232.4,633.3" fill="none" stroke="#0000ff" stroke-width="1.15"/><polyline points="157.4,586.2 157.4,628.8 194.2,628.8" fill="none" stroke="#0000ff" stroke-width="1.15"/><polyline points="212.7,633.5 274,633.5" fill="none" stroke="#0000ff" stroke-width="1.15"/><polyline points="204.4,484.3 204.4,628.5" fill="none" stroke="#0000ff" stroke-width="1.15"/><polyline points="204.4,639 204.4,740.8" fill="none" stroke="#0000ff" stroke-width="1.15"/><polyline points="204.3,484.3 340,484.3" fill="none" stroke="#0000ff" stroke-width="1.15"/><polyline points="246.6,484.3 246.6,568.8" fill="none" stroke="#0000ff" stroke-width="1.15"/><polyline points="204.3,535.3 246.6,535.3" fill="none" stroke="#0000ff" stroke-width="1.15"/><polyline points="204.3,558.3 246.6,558.3" fill="none" stroke="#0000ff" stroke-width="1.15"/><polyline points="204.3,741.2 246.6,741.2" fill="none" stroke="#0000ff" stroke-width="1.15"/><polyline points="204.4,675.5 246.2,675.5" fill="none" stroke="#0000ff" stroke-width="1.15"/><polyline points="246.6,662 246.6,792.4" fill="none" stroke="#0000ff" stroke-width="1.15"/><polyline points="204.3,699.5 246.6,699.5" fill="none" stroke="#0000ff" stroke-width="1.15"/><polyline points="246.6,792.4 1172.4,792.4 1172.4,484.6" fill="none" stroke="#0000ff" stroke-width="1.15"/><polyline points="222.6,806.4 1069.3,806.4 1069.3,535.3" fill="none" stroke="#0000ff" stroke-width="1.15"/><polyline points="288.2,620 288.2,521.3 480.3,521.3" fill="none" stroke="#0000ff" stroke-width="1.15"/><polyline points="288.4,647.3 288.4,699.5" fill="none" stroke="#0000ff" stroke-width="1.15"/><polyline points="349.3,620 349.3,484.3" fill="none" stroke="#0000ff" stroke-width="1.15"/><polyline points="349.3,647.5 349.3,699.5" fill="none" stroke="#0000ff" stroke-width="1.15"/><polyline points="363.6,633.3 400.5,633.3 400.5,657.5" fill="none" stroke="#0000ff" stroke-width="1.15"/><polyline points="288.4,661.5 349.3,661.5" fill="none" stroke="#0000ff" stroke-width="1.15"/><polyline points="288.4,661.5 265,661.5 265,699.5 349.3,699.5" fill="none" stroke="#0000ff" stroke-width="1.15"/><polyline points="307.4,699.5 307.4,731.3" fill="none" stroke="#0000ff" stroke-width="1.15"/><polyline points="307.4,759.6 307.4,792.4" fill="none" stroke="#0000ff" stroke-width="1.15"/><polyline points="321.6,745.5 400.8,745.5" fill="none" stroke="#0000ff" stroke-width="1.15"/><polyline points="358.5,745.5 358.5,792.4" fill="none" stroke="#0000ff" stroke-width="1.15"/><polyline points="381.5,484.3 381.5,554.6 466.4,554.6" fill="none" stroke="#0000ff" stroke-width="1.15"/><polyline points="419.6,484.3 419.6,792.4" fill="none" stroke="#0000ff" stroke-width="1.15"/><polyline points="480.3,484.3 480.3,540.8" fill="none" stroke="#0000ff" stroke-width="1.15"/><polyline points="480.3,568 480.3,723" fill="none" stroke="#0000ff" stroke-width="1.15"/><polyline points="480.6,750 480.6,792.4" fill="none" stroke="#0000ff" stroke-width="1.15"/><polyline points="480.3,577.3 517.3,577.3 517.3,554.6 606.2,554.6" fill="none" stroke="#0000ff" stroke-width="1.15"/><polyline points="517.4,484.3 517.4,521.3" fill="none" stroke="#0000ff" stroke-width="1.15"/><polyline points="340,484.3 606.2,484.3" fill="none" stroke="#0000ff" stroke-width="1.15"/><polyline points="606.2,446.2 606.2,596.3" fill="none" stroke="#0000ff" stroke-width="1.15"/><polyline points="606.2,446.2 1148.6,446.2 1148.6,581.9 1200.4,581.9 1200.4,565" fill="none" stroke="#0000ff" stroke-width="1.15"/><polyline points="639.2,446.2 639.2,544.3" fill="none" stroke="#0000ff" stroke-width="1.15"/><polyline points="676.5,446.2 676.5,502.2" fill="none" stroke="#0000ff" stroke-width="1.15"/><polyline points="704.6,446.2 704.6,502.2" fill="none" stroke="#0000ff" stroke-width="1.15"/><polyline points="639.2,502.2 756.6,502.2" fill="none" stroke="#0000ff" stroke-width="1.15"/><polyline points="770,488.4 830.3,488.4 830.3,521.3" fill="none" stroke="#0000ff" stroke-width="1.15"/><polyline points="770,516.5 770,535.5" fill="none" stroke="#0000ff" stroke-width="1.15"/><polyline points="793.5,446.2 793.5,563.2" fill="none" stroke="#0000ff" stroke-width="1.15"/><polyline points="676.5,535.5 1069.3,535.5" fill="none" stroke="#0000ff" stroke-width="1.15"/><polyline points="676.5,535.5 676.5,638.6" fill="none" stroke="#0000ff" stroke-width="1.15"/><polyline points="676.5,568.5 718.5,568.5" fill="none" stroke="#0000ff" stroke-width="1.15"/><polyline points="732,554.5 999.5,554.5 999.5,563.2" fill="none" stroke="#0000ff" stroke-width="1.15"/><polyline points="732,581.5 732,619.2 1069.3,619.2" fill="none" stroke="#0000ff" stroke-width="1.15"/><polyline points="732,582.3 781.2,582.3" fill="none" stroke="#0000ff" stroke-width="1.15"/><polyline points="742.3,582.3 742.3,638.6 966.2,638.6 966.2,582.3 987.6,582.3" fill="none" stroke="#0000ff" stroke-width="1.15"/><polyline points="793.5,582.3 793.5,731" fill="none" stroke="#0000ff" stroke-width="1.15"/><polyline points="863.3,582.3 863.3,731" fill="none" stroke="#0000ff" stroke-width="1.15"/><polyline points="851.4,582.3 830.3,582.3 830.3,638.6" fill="none" stroke="#0000ff" stroke-width="1.15"/><polyline points="933.4,582.3 933.4,731" fill="none" stroke="#0000ff" stroke-width="1.15"/><polyline points="922.3,582.3 901.2,582.3 901.2,638.6" fill="none" stroke="#0000ff" stroke-width="1.15"/><polyline points="999.5,582.3 999.5,731" fill="none" stroke="#0000ff" stroke-width="1.15"/><polyline points="987.6,582.3 966.2,582.3 966.2,638.6" fill="none" stroke="#0000ff" stroke-width="1.15"/><polyline points="676.5,624.4 648.4,624.4 648.4,652.5" fill="none" stroke="#0000ff" stroke-width="1.15"/><polyline points="480.3,652.4 662.3,652.5" fill="none" stroke="#0000ff" stroke-width="1.15"/><polyline points="676.4,665.5 676.4,792.4" fill="none" stroke="#0000ff" stroke-width="1.15"/><polyline points="498.4,596.5 498.4,652.4" fill="none" stroke="#0000ff" stroke-width="1.15"/><polyline points="498.4,633.3 526.6,633.3 526.6,596.5" fill="none" stroke="#0000ff" stroke-width="1.15"/><polyline points="419.6,736.2 466.5,736.2" fill="none" stroke="#0000ff" stroke-width="1.15"/><polyline points="433.5,736.2 433.5,792.4" fill="none" stroke="#0000ff" stroke-width="1.15"/><polyline points="480.6,680.4 522.2,680.4 522.2,708.1 606.5,708.1" fill="none" stroke="#0000ff" stroke-width="1.15"/><polyline points="526.5,750.7 526.5,792.4" fill="none" stroke="#0000ff" stroke-width="1.15"/><polyline points="606.5,680.4 606.5,792.4" fill="none" stroke="#0000ff" stroke-width="1.15"/><polyline points="676.4,736.2 713.5,736.2" fill="none" stroke="#0000ff" stroke-width="1.15"/><polyline points="727.3,722.4 793.3,722.4" fill="none" stroke="#0000ff" stroke-width="1.15"/><polyline points="727.3,749 727.3,792.4" fill="none" stroke="#0000ff" stroke-width="1.15"/><polyline points="727.3,750.7 781.1,750.7" fill="none" stroke="#0000ff" stroke-width="1.15"/><polyline points="742.4,750.7 742.4,703.2 966.5,703.2" fill="none" stroke="#0000ff" stroke-width="1.15"/><polyline points="793.3,750.6 793.3,792.1" fill="none" stroke="#0000ff" stroke-width="1.15"/><polyline points="863.4,750.6 863.4,792.1" fill="none" stroke="#0000ff" stroke-width="1.15"/><polyline points="826.6,703.2 826.6,750.6 851,750.6" fill="none" stroke="#0000ff" stroke-width="1.15"/><polyline points="933.4,750.6 933.4,792.1" fill="none" stroke="#0000ff" stroke-width="1.15"/><polyline points="901.4,703.2 901.4,750.6 921,750.6" fill="none" stroke="#0000ff" stroke-width="1.15"/><polyline points="999.3,750.6 999.3,792.1" fill="none" stroke="#0000ff" stroke-width="1.15"/><polyline points="966.5,703.2 966.5,750.6 987.1,750.6" fill="none" stroke="#0000ff" stroke-width="1.15"/><polyline points="1041.4,619.2 1041.4,689.8" fill="none" stroke="#0000ff" stroke-width="1.15"/><polyline points="1069.3,638.2 1148.4,638.2 1148.4,671.3" fill="none" stroke="#0000ff" stroke-width="1.15"/><polyline points="1106.2,638.2 1106.2,615.3 1148.4,615.3 1148.4,638.2" fill="none" stroke="#0000ff" stroke-width="1.15"/><polyline points="1069.3,671.3 1242.2,671.3 1242.2,713.2" fill="none" stroke="#0000ff" stroke-width="1.15"/><polyline points="1111.4,671.3 1111.4,694.1 1219.4,694.1 1219.4,671.3" fill="none" stroke="#0000ff" stroke-width="1.15"/><polyline points="1148.6,484.6 1200.4,484.6 1200.4,491" fill="none" stroke="#0000ff" stroke-width="1.15"/><polyline points="1200.4,508.7 1200.4,547" fill="none" stroke="#0000ff" stroke-width="1.15"/><polyline points="1126.3,535.3 1200.4,535.3" fill="none" stroke="#0000ff" stroke-width="1.15"/><rect x="49.7" y="635" width="14.6" height="6" fill="#c0c0c0" stroke="#000080" stroke-width="1.05"/><rect x="115.0" y="635" width="14.6" height="6" fill="#c0c0c0" stroke="#000080" stroke-width="1.05"/><circle cx="21" cy="658.2" r="9.5" fill="none" stroke="#000080" stroke-width="1.05"/><line x1="17" y1="653.7" x2="25" y2="653.7" stroke="#000080" stroke-width="1.05"/><line x1="21" y1="649.7" x2="21" y2="657.7" stroke="#000080" stroke-width="1.05"/><line x1="17" y1="664.2" x2="25" y2="664.2" stroke="#000080" stroke-width="1.05"/><circle cx="21" cy="691.3" r="9.5" fill="none" stroke="#000080" stroke-width="1.05"/><line x1="17" y1="686.8" x2="25" y2="686.8" stroke="#000080" stroke-width="1.05"/><line x1="21" y1="682.8" x2="21" y2="690.8" stroke="#000080" stroke-width="1.05"/><line x1="17" y1="697.3" x2="25" y2="697.3" stroke="#000080" stroke-width="1.05"/><polygon points="15.5,729 26.5,729 21,735" fill="none" stroke="#0000ff" stroke-width="1.05"/><rect x="86.5" y="654.5999999999999" width="10" height="4.4" fill="#c0c0c0"/><line x1="86.5" y1="655.3" x2="96.5" y2="655.3" stroke="#000080" stroke-width="1.05"/><line x1="86.5" y1="658.3" x2="96.5" y2="658.3" stroke="#000080" stroke-width="1.05"/><polygon points="86.0,677 97.0,677 91.5,683" fill="none" stroke="#0000ff" stroke-width="1.05"/><rect x="159.6" y="647.5" width="6" height="14.6" fill="#c0c0c0" stroke="#000080" stroke-width="1.05"/><rect x="157.6" y="678.3" width="10" height="4.4" fill="#c0c0c0"/><line x1="157.6" y1="679.0" x2="167.6" y2="679.0" stroke="#000080" stroke-width="1.05"/><line x1="157.6" y1="682.0" x2="167.6" y2="682.0" stroke="#000080" stroke-width="1.05"/><polygon points="157.1,694.8 168.1,694.8 162.6,700.8" fill="none" stroke="#0000ff" stroke-width="1.05"/><rect x="177.6" y="773.5" width="6" height="14.6" fill="#c0c0c0" stroke="#000080" stroke-width="1.05"/><rect x="202.8" y="754.8" width="4.4" height="10" fill="#c0c0c0"/><line x1="203.5" y1="754.8" x2="203.5" y2="764.8" stroke="#000080" stroke-width="1.05"/><line x1="206.5" y1="754.8" x2="206.5" y2="764.8" stroke="#000080" stroke-width="1.05"/><polygon points="125.5,800.9 125.5,811.9 119.5,806.4" fill="none" stroke="#0000ff" stroke-width="1.05"/><rect x="143.0" y="803.4" width="14.6" height="6" fill="#c0c0c0" stroke="#000080" stroke-width="1.05"/><rect x="194.5" y="803.4" width="14.6" height="6" fill="#c0c0c0" stroke="#000080" stroke-width="1.05"/><polygon points="125,604.9 125,615.9 119,610.4" fill="none" stroke="#0000ff" stroke-width="1.05"/><rect x="133.79999999999998" y="607.4" width="14.6" height="6" fill="#c0c0c0" stroke="#000080" stroke-width="1.05"/><rect x="172" y="605.9" width="8" height="9" fill="#c0c0c0"/><polygon points="172.5,605.9 172.5,614.9 179.5,610.4" fill="none" stroke="#000080" stroke-width="1.05"/><line x1="179.5" y1="605.9" x2="179.5" y2="614.9" stroke="#000080" stroke-width="1.05"/><line x1="171" y1="610.4" x2="181" y2="610.4" stroke="#000080" stroke-width="1.05"/><rect x="214.2" y="605.9" width="8" height="9" fill="#c0c0c0"/><polygon points="214.7,605.9 214.7,614.9 221.7,610.4" fill="none" stroke="#000080" stroke-width="1.05"/><line x1="221.7" y1="605.9" x2="221.7" y2="614.9" stroke="#000080" stroke-width="1.05"/><line x1="213.2" y1="610.4" x2="223.2" y2="610.4" stroke="#000080" stroke-width="1.05"/><polygon points="158,566.9 158,577.9 152,572.4" fill="none" stroke="#0000ff" stroke-width="1.05"/><rect x="166.7" y="569.4" width="14.6" height="6" fill="#c0c0c0" stroke="#000080" stroke-width="1.05"/><rect x="172" y="581.7" width="8" height="9" fill="#c0c0c0"/><polygon points="179.5,581.7 179.5,590.7 172.5,586.2" fill="none" stroke="#000080" stroke-width="1.05"/><line x1="172.5" y1="581.7" x2="172.5" y2="590.7" stroke="#000080" stroke-width="1.05"/><line x1="171" y1="586.2" x2="181" y2="586.2" stroke="#000080" stroke-width="1.05"/><rect x="214.2" y="581.7" width="8" height="9" fill="#c0c0c0"/><polygon points="221.7,581.7 221.7,590.7 214.7,586.2" fill="none" stroke="#000080" stroke-width="1.05"/><line x1="214.7" y1="581.7" x2="214.7" y2="590.7" stroke="#000080" stroke-width="1.05"/><line x1="213.2" y1="586.2" x2="223.2" y2="586.2" stroke="#000080" stroke-width="1.05"/><polygon points="194.2,624.4 194.2,643.4 212.7,633.7" fill="none" stroke="#000080" stroke-width="1.05"/><line x1="196.2" y1="629.4" x2="199.2" y2="629.4" stroke="#000080" stroke-width="1.05"/><line x1="196.2" y1="638.4" x2="199.2" y2="638.4" stroke="#000080" stroke-width="1.05"/><line x1="197.7" y1="636.9" x2="197.7" y2="639.9" stroke="#000080" stroke-width="1.05"/><rect x="245.89999999999998" y="630.5" width="14.6" height="6" fill="#c0c0c0" stroke="#000080" stroke-width="1.05"/><rect x="260.0" y="481.3" width="14.6" height="6" fill="#c0c0c0" stroke="#000080" stroke-width="1.05"/><rect x="242.1" y="507.9" width="9" height="8" fill="#c0c0c0"/><polygon points="242.1,515.4 251.1,515.4 246.6,508.4" fill="none" stroke="#000080" stroke-width="1.05"/><line x1="242.1" y1="508.4" x2="251.1" y2="508.4" stroke="#000080" stroke-width="1.05"/><line x1="246.6" y1="506.9" x2="246.6" y2="516.9" stroke="#000080" stroke-width="1.05"/><line x1="251.1" y1="508.4" x2="253.1" y2="510.4" stroke="#000080" stroke-width="1.05"/><line x1="242.1" y1="508.4" x2="240.1" y2="506.4" stroke="#000080" stroke-width="1.05"/><polygon points="241.1,568.8 252.1,568.8 246.6,574.8" fill="none" stroke="#0000ff" stroke-width="1.05"/><rect x="220.3" y="530.3" width="4.4" height="10" fill="#c0c0c0"/><line x1="221.0" y1="530.3" x2="221.0" y2="540.3" stroke="#000080" stroke-width="1.05"/><line x1="224.0" y1="530.3" x2="224.0" y2="540.3" stroke="#000080" stroke-width="1.05"/><rect x="220.3" y="553.3" width="4.4" height="10" fill="#c0c0c0"/><line x1="221.0" y1="553.3" x2="221.0" y2="563.3" stroke="#000080" stroke-width="1.05"/><line x1="224.0" y1="553.3" x2="224.0" y2="563.3" stroke="#000080" stroke-width="1.05"/><rect x="220.20000000000002" y="670.5" width="4.4" height="10" fill="#c0c0c0"/><line x1="220.9" y1="670.5" x2="220.9" y2="680.5" stroke="#000080" stroke-width="1.05"/><line x1="223.9" y1="670.5" x2="223.9" y2="680.5" stroke="#000080" stroke-width="1.05"/><polygon points="241.1,662 252.1,662 246.6,656" fill="none" stroke="#0000ff" stroke-width="1.05"/><rect x="220.5" y="694.5" width="5" height="10" fill="#c0c0c0"/><line x1="221.2" y1="694.5" x2="221.2" y2="704.5" stroke="#000080" stroke-width="1.05"/><path d="M226,694.5 Q223.5,699.5 226,704.5" fill="none" stroke="#000080" stroke-width="1.05"/><line x1="217.5" y1="703.0" x2="220.5" y2="703.0" stroke="#000080" stroke-width="1"/><line x1="219" y1="701.5" x2="219" y2="704.5" stroke="#000080" stroke-width="1"/><rect x="242.1" y="713.4" width="9" height="8" fill="#c0c0c0"/><polygon points="242.1,720.9 251.1,720.9 246.6,713.9" fill="none" stroke="#000080" stroke-width="1.05"/><line x1="242.1" y1="713.9" x2="251.1" y2="713.9" stroke="#000080" stroke-width="1.05"/><line x1="246.6" y1="712.4" x2="246.6" y2="722.4" stroke="#000080" stroke-width="1.05"/><line x1="251.1" y1="713.9" x2="253.1" y2="715.9" stroke="#000080" stroke-width="1.05"/><line x1="242.1" y1="713.9" x2="240.1" y2="711.9" stroke="#000080" stroke-width="1.05"/><rect x="264.7" y="789.4" width="14.6" height="6" fill="#c0c0c0" stroke="#000080" stroke-width="1.05"/><line x1="274.5" y1="624.2" x2="274.5" y2="643.3" stroke="#000080" stroke-width="1.4"/><line x1="274.5" y1="628.2" x2="288.4" y2="620.2" stroke="#000080" stroke-width="1.05"/><line x1="274.5" y1="639.3" x2="288.4" y2="647.3" stroke="#000080" stroke-width="1.05"/><polygon points="288.4,647.3 283.4,646.5 285.59999999999997,643.0999999999999" fill="none" stroke="#000080" stroke-width="1"/><rect x="285.6" y="675.5" width="6" height="14.6" fill="#c0c0c0" stroke="#000080" stroke-width="1.05"/><line x1="363.6" y1="624.2" x2="363.6" y2="643.7" stroke="#000080" stroke-width="1.4"/><line x1="363.6" y1="628.2" x2="349.3" y2="620.2" stroke="#000080" stroke-width="1.05"/><line x1="363.6" y1="639.7" x2="349.3" y2="647.7" stroke="#000080" stroke-width="1.05"/><polygon points="349.3,647.7 354.3,646.9000000000001 352.1,643.5" fill="none" stroke="#000080" stroke-width="1"/><rect x="346.3" y="675.5" width="6" height="14.6" fill="#c0c0c0" stroke="#000080" stroke-width="1.05"/><rect x="372.2" y="630.3" width="14.6" height="6" fill="#c0c0c0" stroke="#000080" stroke-width="1.05"/><polygon points="395.0,657.5 406.0,657.5 400.5,663.5" fill="none" stroke="#0000ff" stroke-width="1.05"/><rect x="297.7" y="658.5" width="14.6" height="6" fill="#c0c0c0" stroke="#000080" stroke-width="1.05"/><rect x="314" y="655.5" width="25" height="8" fill="#c0c0c0"/><path d="M314,661.5 C314.0,653.5 324.3333333333333,653.5 322.3333333333333,661.5 C322.3333333333333,653.5 332.66666666666663,653.5 330.66666666666663,661.5 C330.6666666666667,653.5 341.0,653.5 339.0,661.5" fill="none" stroke="#000080" stroke-width="1.05"/><rect x="260" y="677.8" width="10" height="4.4" fill="#c0c0c0"/><line x1="260" y1="678.5" x2="270" y2="678.5" stroke="#000080" stroke-width="1.05"/><line x1="260" y1="681.5" x2="270" y2="681.5" stroke="#000080" stroke-width="1.05"/><rect x="304.4" y="708.3000000000001" width="6" height="14.6" fill="#c0c0c0" stroke="#000080" stroke-width="1.05"/><line x1="321.6" y1="736" x2="321.6" y2="755.6" stroke="#000080" stroke-width="1.4"/><line x1="321.6" y1="740" x2="307.4" y2="732" stroke="#000080" stroke-width="1.05"/><line x1="321.6" y1="751.6" x2="307.4" y2="759.6" stroke="#000080" stroke-width="1.05"/><polygon points="307.4,759.6 312.4,758.8000000000001 310.2,755.4" fill="none" stroke="#000080" stroke-width="1"/><rect x="304.4" y="773.7" width="6" height="14.6" fill="#c0c0c0" stroke="#000080" stroke-width="1.05"/><rect x="334.7" y="742.5" width="14.6" height="6" fill="#c0c0c0" stroke="#000080" stroke-width="1.05"/><rect x="376.9" y="742.5" width="14.6" height="6" fill="#c0c0c0" stroke="#000080" stroke-width="1.05"/><polygon points="400.8,740.0 400.8,751.0 406.8,745.5" fill="none" stroke="#0000ff" stroke-width="1.05"/><rect x="354.0" y="756" width="9" height="8" fill="#c0c0c0"/><polygon points="354.0,756.5 363.0,756.5 358.5,763.5" fill="none" stroke="#000080" stroke-width="1.05"/><line x1="354.0" y1="763.5" x2="363.0" y2="763.5" stroke="#000080" stroke-width="1.05"/><line x1="358.5" y1="755" x2="358.5" y2="765" stroke="#000080" stroke-width="1.05"/><rect x="354.0" y="775" width="9" height="8" fill="#c0c0c0"/><polygon points="354.0,775.5 363.0,775.5 358.5,782.5" fill="none" stroke="#000080" stroke-width="1.05"/><line x1="354.0" y1="782.5" x2="363.0" y2="782.5" stroke="#000080" stroke-width="1.05"/><line x1="358.5" y1="774" x2="358.5" y2="784" stroke="#000080" stroke-width="1.05"/><rect x="377.0" y="499.2" width="9" height="8" fill="#c0c0c0"/><polygon points="377.0,499.7 386.0,499.7 381.5,506.7" fill="none" stroke="#000080" stroke-width="1.05"/><line x1="377.0" y1="506.7" x2="386.0" y2="506.7" stroke="#000080" stroke-width="1.05"/><line x1="381.5" y1="498.2" x2="381.5" y2="508.2" stroke="#000080" stroke-width="1.05"/><rect x="377.0" y="536.1" width="9" height="8" fill="#c0c0c0"/><polygon points="377.0,536.6 386.0,536.6 381.5,543.6" fill="none" stroke="#000080" stroke-width="1.05"/><line x1="377.0" y1="543.6" x2="386.0" y2="543.6" stroke="#000080" stroke-width="1.05"/><line x1="381.5" y1="535.1" x2="381.5" y2="545.1" stroke="#000080" stroke-width="1.05"/><rect x="414.6" y="500.6" width="10" height="4.4" fill="#c0c0c0"/><line x1="414.6" y1="501.3" x2="424.6" y2="501.3" stroke="#000080" stroke-width="1.05"/><line x1="414.6" y1="504.3" x2="424.6" y2="504.3" stroke="#000080" stroke-width="1.05"/><rect x="437.7" y="551.6" width="14.6" height="6" fill="#c0c0c0" stroke="#000080" stroke-width="1.05"/><line x1="466.3" y1="544.3" x2="466.3" y2="564" stroke="#000080" stroke-width="1.4"/><line x1="466.3" y1="548.3" x2="480.3" y2="540.3" stroke="#000080" stroke-width="1.05"/><line x1="466.3" y1="560" x2="480.3" y2="568" stroke="#000080" stroke-width="1.05"/><polygon points="469.3,546.3 474.3,545.5 472.8,542.3" fill="none" stroke="#000080" stroke-width="1"/><rect x="477.3" y="493.2" width="6" height="14.6" fill="#c0c0c0" stroke="#000080" stroke-width="1.05"/><rect x="556" y="550.1" width="8" height="9" fill="#c0c0c0"/><polygon points="556.5,550.1 556.5,559.1 563.5,554.6" fill="none" stroke="#000080" stroke-width="1.05"/><line x1="563.5" y1="550.1" x2="563.5" y2="559.1" stroke="#000080" stroke-width="1.05"/><line x1="555" y1="554.6" x2="565" y2="554.6" stroke="#000080" stroke-width="1.05"/><rect x="512.4" y="500.9" width="10" height="5" fill="#c0c0c0"/><line x1="512.4" y1="501.59999999999997" x2="522.4" y2="501.59999999999997" stroke="#000080" stroke-width="1.05"/><path d="M512.4,506.4 Q517.4,503.9 522.4,506.4" fill="none" stroke="#000080" stroke-width="1.05"/><line x1="513.4" y1="498.9" x2="516.4" y2="498.9" stroke="#000080" stroke-width="1"/><line x1="514.9" y1="497.4" x2="514.9" y2="500.4" stroke="#000080" stroke-width="1"/><polygon points="511.9,521.3 522.9,521.3 517.4,527.3" fill="none" stroke="#0000ff" stroke-width="1.05"/><rect x="531.0" y="481.3" width="14.6" height="6" fill="#c0c0c0" stroke="#000080" stroke-width="1.05"/><rect x="601.7" y="531.5" width="9" height="8" fill="#c0c0c0"/><polygon points="601.7,539.0 610.7,539.0 606.2,532.0" fill="none" stroke="#000080" stroke-width="1.05"/><line x1="601.7" y1="532.0" x2="610.7" y2="532.0" stroke="#000080" stroke-width="1.05"/><line x1="606.2" y1="530.5" x2="606.2" y2="540.5" stroke="#000080" stroke-width="1.05"/><line x1="610.7" y1="532.0" x2="612.7" y2="534.0" stroke="#000080" stroke-width="1.05"/><line x1="601.7" y1="532.0" x2="599.7" y2="530.0" stroke="#000080" stroke-width="1.05"/><rect x="603.2" y="563.1" width="6" height="14.6" fill="#c0c0c0" stroke="#000080" stroke-width="1.05"/><polygon points="600.7,596.3 611.7,596.3 606.2,602.3" fill="none" stroke="#0000ff" stroke-width="1.05"/><rect x="634.7" y="457" width="9" height="8" fill="#c0c0c0"/><polygon points="634.7,457.5 643.7,457.5 639.2,464.5" fill="none" stroke="#000080" stroke-width="1.05"/><line x1="634.7" y1="464.5" x2="643.7" y2="464.5" stroke="#000080" stroke-width="1.05"/><line x1="639.2" y1="456" x2="639.2" y2="466" stroke="#000080" stroke-width="1.05"/><rect x="634.7" y="484.8" width="9" height="8" fill="#c0c0c0"/><polygon points="634.7,485.3 643.7,485.3 639.2,492.3" fill="none" stroke="#000080" stroke-width="1.05"/><line x1="634.7" y1="492.3" x2="643.7" y2="492.3" stroke="#000080" stroke-width="1.05"/><line x1="639.2" y1="483.8" x2="639.2" y2="493.8" stroke="#000080" stroke-width="1.05"/><rect x="636.2" y="516.7" width="6" height="14.6" fill="#c0c0c0" stroke="#000080" stroke-width="1.05"/><polygon points="633.7,544.3 644.7,544.3 639.2,550.3" fill="none" stroke="#0000ff" stroke-width="1.05"/><line x1="643.7" y1="485.3" x2="645" y2="487" stroke="#000080" stroke-width="1"/><line x1="634.7" y1="492.3" x2="633.4" y2="490.6" stroke="#000080" stroke-width="1"/><rect x="671.5" y="463.2" width="10" height="5" fill="#c0c0c0"/><line x1="671.5" y1="463.9" x2="681.5" y2="463.9" stroke="#000080" stroke-width="1.05"/><path d="M671.5,468.7 Q676.5,466.2 681.5,468.7" fill="none" stroke="#000080" stroke-width="1.05"/><line x1="672.5" y1="461.2" x2="675.5" y2="461.2" stroke="#000080" stroke-width="1"/><line x1="674.0" y1="459.7" x2="674.0" y2="462.7" stroke="#000080" stroke-width="1"/><rect x="699.6" y="472.90000000000003" width="10" height="4.4" fill="#c0c0c0"/><line x1="699.6" y1="473.6" x2="709.6" y2="473.6" stroke="#000080" stroke-width="1.05"/><line x1="699.6" y1="476.6" x2="709.6" y2="476.6" stroke="#000080" stroke-width="1.05"/><rect x="723.1" y="499.2" width="14.6" height="6" fill="#c0c0c0" stroke="#000080" stroke-width="1.05"/><line x1="756.6" y1="492.7" x2="756.6" y2="512.5" stroke="#000080" stroke-width="1.4"/><line x1="756.6" y1="496.7" x2="770" y2="488.7" stroke="#000080" stroke-width="1.05"/><line x1="756.6" y1="508.5" x2="770" y2="516.5" stroke="#000080" stroke-width="1.05"/><polygon points="759.6,494.7 764.6,493.9 763.1,490.7" fill="none" stroke="#000080" stroke-width="1"/><rect x="825.3" y="504.8" width="10" height="4.4" fill="#c0c0c0"/><line x1="825.3" y1="505.5" x2="835.3" y2="505.5" stroke="#000080" stroke-width="1.05"/><line x1="825.3" y1="508.5" x2="835.3" y2="508.5" stroke="#000080" stroke-width="1.05"/><polygon points="824.8,521.3 835.8,521.3 830.3,527.3" fill="none" stroke="#0000ff" stroke-width="1.05"/><rect x="790.5" y="460.4" width="6" height="14.6" fill="#c0c0c0" stroke="#000080" stroke-width="1.05"/><rect x="690.2" y="532.5" width="14.6" height="6" fill="#c0c0c0" stroke="#000080" stroke-width="1.05"/><rect x="690.2" y="565.5" width="14.6" height="6" fill="#c0c0c0" stroke="#000080" stroke-width="1.05"/><line x1="718.5" y1="558.5" x2="718.5" y2="577.5" stroke="#000080" stroke-width="1.4"/><line x1="718.5" y1="562.5" x2="732" y2="554.5" stroke="#000080" stroke-width="1.05"/><line x1="718.5" y1="573.5" x2="732" y2="581.5" stroke="#000080" stroke-width="1.05"/><polygon points="732,581.5 727,580.7 729.2,577.3" fill="none" stroke="#000080" stroke-width="1"/><rect x="729" y="595.9000000000001" width="6" height="14.6" fill="#c0c0c0" stroke="#000080" stroke-width="1.05"/><rect x="751.0" y="579.3" width="14.6" height="6" fill="#c0c0c0" stroke="#000080" stroke-width="1.05"/><rect x="672.0" y="577.8" width="9" height="8" fill="#c0c0c0"/><polygon points="672.0,578.3 681.0,578.3 676.5,585.3" fill="none" stroke="#000080" stroke-width="1.05"/><line x1="672.0" y1="585.3" x2="681.0" y2="585.3" stroke="#000080" stroke-width="1.05"/><line x1="676.5" y1="576.8" x2="676.5" y2="586.8" stroke="#000080" stroke-width="1.05"/><rect x="672.0" y="605.7" width="9" height="8" fill="#c0c0c0"/><polygon points="672.0,606.2 681.0,606.2 676.5,613.2" fill="none" stroke="#000080" stroke-width="1.05"/><line x1="672.0" y1="613.2" x2="681.0" y2="613.2" stroke="#000080" stroke-width="1.05"/><line x1="676.5" y1="604.7" x2="676.5" y2="614.7" stroke="#000080" stroke-width="1.05"/><path d="M684,578 q3,-3 5,1 q2,4 5,1 M686,583 q3,-3 5,1 q2,4 5,1" fill="none" stroke="#000080" stroke-width="1"/><line x1="781.2" y1="563.2" x2="781.2" y2="582.3" stroke="#000080" stroke-width="1.2"/><line x1="784.2" y1="560.2" x2="784.2" y2="566.7" stroke="#000080" stroke-width="1.05"/><line x1="784.2" y1="569.7" x2="784.2" y2="575.8" stroke="#000080" stroke-width="1.05"/><line x1="784.2" y1="578.8" x2="784.2" y2="585.3" stroke="#000080" stroke-width="1.05"/><line x1="784.2" y1="563.2" x2="793.5" y2="563.2" stroke="#000080" stroke-width="1.05"/><line x1="784.2" y1="582.3" x2="793.5" y2="582.3" stroke="#000080" stroke-width="1.05"/><line x1="784.2" y1="572.75" x2="790.5" y2="572.75" stroke="#000080" stroke-width="1.05"/><line x1="790.5" y1="572.75" x2="790.5" y2="570.25" stroke="#000080" stroke-width="1"/><line x1="790.5" y1="570.25" x2="793.5" y2="570.25" stroke="#000080" stroke-width="1"/><line x1="793.5" y1="570.25" x2="793.5" y2="582.3" stroke="#000080" stroke-width="1.05"/><polygon points="785.2,572.75 788.2,570.75 788.2,574.75" fill="none" stroke="#000080" stroke-width="1"/><rect x="790.5" y="600.7" width="6" height="14.6" fill="#c0c0c0" stroke="#000080" stroke-width="1.05"/><line x1="851.4" y1="563.2" x2="851.4" y2="582.3" stroke="#000080" stroke-width="1.2"/><line x1="854.4" y1="560.2" x2="854.4" y2="566.7" stroke="#000080" stroke-width="1.05"/><line x1="854.4" y1="569.7" x2="854.4" y2="575.8" stroke="#000080" stroke-width="1.05"/><line x1="854.4" y1="578.8" x2="854.4" y2="585.3" stroke="#000080" stroke-width="1.05"/><line x1="854.4" y1="563.2" x2="863.3" y2="563.2" stroke="#000080" stroke-width="1.05"/><line x1="854.4" y1="582.3" x2="863.3" y2="582.3" stroke="#000080" stroke-width="1.05"/><line x1="854.4" y1="572.75" x2="860.3" y2="572.75" stroke="#000080" stroke-width="1.05"/><line x1="860.3" y1="572.75" x2="860.3" y2="570.25" stroke="#000080" stroke-width="1"/><line x1="860.3" y1="570.25" x2="863.3" y2="570.25" stroke="#000080" stroke-width="1"/><line x1="863.3" y1="570.25" x2="863.3" y2="582.3" stroke="#000080" stroke-width="1.05"/><polygon points="855.4,572.75 858.4,570.75 858.4,574.75" fill="none" stroke="#000080" stroke-width="1"/><rect x="860.3" y="600.7" width="6" height="14.6" fill="#c0c0c0" stroke="#000080" stroke-width="1.05"/><rect x="827.3" y="595.9000000000001" width="6" height="14.6" fill="#c0c0c0" stroke="#000080" stroke-width="1.05"/><line x1="922.3" y1="563.2" x2="922.3" y2="582.3" stroke="#000080" stroke-width="1.2"/><line x1="925.3" y1="560.2" x2="925.3" y2="566.7" stroke="#000080" stroke-width="1.05"/><line x1="925.3" y1="569.7" x2="925.3" y2="575.8" stroke="#000080" stroke-width="1.05"/><line x1="925.3" y1="578.8" x2="925.3" y2="585.3" stroke="#000080" stroke-width="1.05"/><line x1="925.3" y1="563.2" x2="933.4" y2="563.2" stroke="#000080" stroke-width="1.05"/><line x1="925.3" y1="582.3" x2="933.4" y2="582.3" stroke="#000080" stroke-width="1.05"/><line x1="925.3" y1="572.75" x2="930.4" y2="572.75" stroke="#000080" stroke-width="1.05"/><line x1="930.4" y1="572.75" x2="930.4" y2="570.25" stroke="#000080" stroke-width="1"/><line x1="930.4" y1="570.25" x2="933.4" y2="570.25" stroke="#000080" stroke-width="1"/><line x1="933.4" y1="570.25" x2="933.4" y2="582.3" stroke="#000080" stroke-width="1.05"/><polygon points="926.3,572.75 929.3,570.75 929.3,574.75" fill="none" stroke="#000080" stroke-width="1"/><rect x="930.4" y="600.7" width="6" height="14.6" fill="#c0c0c0" stroke="#000080" stroke-width="1.05"/><rect x="898.2" y="595.9000000000001" width="6" height="14.6" fill="#c0c0c0" stroke="#000080" stroke-width="1.05"/><line x1="987.6" y1="563.2" x2="987.6" y2="582.3" stroke="#000080" stroke-width="1.2"/><line x1="990.6" y1="560.2" x2="990.6" y2="566.7" stroke="#000080" stroke-width="1.05"/><line x1="990.6" y1="569.7" x2="990.6" y2="575.8" stroke="#000080" stroke-width="1.05"/><line x1="990.6" y1="578.8" x2="990.6" y2="585.3" stroke="#000080" stroke-width="1.05"/><line x1="990.6" y1="563.2" x2="999.5" y2="563.2" stroke="#000080" stroke-width="1.05"/><line x1="990.6" y1="582.3" x2="999.5" y2="582.3" stroke="#000080" stroke-width="1.05"/><line x1="990.6" y1="572.75" x2="996.5" y2="572.75" stroke="#000080" stroke-width="1.05"/><line x1="996.5" y1="572.75" x2="996.5" y2="570.25" stroke="#000080" stroke-width="1"/><line x1="996.5" y1="570.25" x2="999.5" y2="570.25" stroke="#000080" stroke-width="1"/><line x1="999.5" y1="570.25" x2="999.5" y2="582.3" stroke="#000080" stroke-width="1.05"/><polygon points="991.6,572.75 994.6,570.75 994.6,574.75" fill="none" stroke="#000080" stroke-width="1"/><rect x="996.5" y="600.7" width="6" height="14.6" fill="#c0c0c0" stroke="#000080" stroke-width="1.05"/><rect x="963.2" y="595.9000000000001" width="6" height="14.6" fill="#c0c0c0" stroke="#000080" stroke-width="1.05"/><rect x="659.1" y="619.9" width="8" height="9" fill="#c0c0c0"/><polygon points="659.6,619.9 659.6,628.9 666.6,624.4" fill="none" stroke="#000080" stroke-width="1.05"/><line x1="666.6" y1="619.9" x2="666.6" y2="628.9" stroke="#000080" stroke-width="1.05"/><line x1="658.1" y1="624.4" x2="668.1" y2="624.4" stroke="#000080" stroke-width="1.05"/><line x1="662.3" y1="643" x2="662.3" y2="661.7" stroke="#000080" stroke-width="1.4"/><line x1="662.3" y1="647" x2="676.4" y2="639" stroke="#000080" stroke-width="1.05"/><line x1="662.3" y1="657.7" x2="676.4" y2="665.7" stroke="#000080" stroke-width="1.05"/><polygon points="665.3,645 670.3,644.2 668.8,641" fill="none" stroke="#000080" stroke-width="1"/><rect x="673.4" y="764.2" width="6" height="14.6" fill="#c0c0c0" stroke="#000080" stroke-width="1.05"/><polygon points="492.9,596.5 503.9,596.5 498.4,590.5" fill="none" stroke="#0000ff" stroke-width="1.05"/><rect x="495.4" y="605.6" width="6" height="14.6" fill="#c0c0c0" stroke="#000080" stroke-width="1.05"/><polygon points="521.1,596.5 532.1,596.5 526.6,590.5" fill="none" stroke="#0000ff" stroke-width="1.05"/><rect x="521.6" y="612.8" width="10" height="4.4" fill="#c0c0c0"/><line x1="521.6" y1="613.5" x2="531.6" y2="613.5" stroke="#000080" stroke-width="1.05"/><line x1="521.6" y1="616.5" x2="531.6" y2="616.5" stroke="#000080" stroke-width="1.05"/><rect x="437.9" y="733.2" width="14.6" height="6" fill="#c0c0c0" stroke="#000080" stroke-width="1.05"/><rect x="416.6" y="708.2" width="6" height="14.6" fill="#c0c0c0" stroke="#000080" stroke-width="1.05"/><rect x="414.6" y="757.3" width="10" height="4.4" fill="#c0c0c0"/><line x1="414.6" y1="758.0" x2="424.6" y2="758.0" stroke="#000080" stroke-width="1.05"/><line x1="414.6" y1="761.0" x2="424.6" y2="761.0" stroke="#000080" stroke-width="1.05"/><rect x="429.0" y="761" width="9" height="8" fill="#c0c0c0"/><polygon points="429.0,761.5 438.0,761.5 433.5,768.5" fill="none" stroke="#000080" stroke-width="1.05"/><line x1="429.0" y1="768.5" x2="438.0" y2="768.5" stroke="#000080" stroke-width="1.05"/><line x1="433.5" y1="760" x2="433.5" y2="770" stroke="#000080" stroke-width="1.05"/><rect x="429.0" y="778.4" width="9" height="8" fill="#c0c0c0"/><polygon points="429.0,778.9 438.0,778.9 433.5,785.9" fill="none" stroke="#000080" stroke-width="1.05"/><line x1="429.0" y1="785.9" x2="438.0" y2="785.9" stroke="#000080" stroke-width="1.05"/><line x1="433.5" y1="777.4" x2="433.5" y2="787.4" stroke="#000080" stroke-width="1.05"/><line x1="466.5" y1="727.3" x2="466.5" y2="745.1" stroke="#000080" stroke-width="1.4"/><line x1="466.5" y1="731.3" x2="480.6" y2="723.3" stroke="#000080" stroke-width="1.05"/><line x1="466.5" y1="741.1" x2="480.6" y2="749.1" stroke="#000080" stroke-width="1.05"/><polygon points="480.6,749.1 475.6,748.3000000000001 477.8,744.9" fill="none" stroke="#000080" stroke-width="1"/><rect x="477.6" y="764.2" width="6" height="14.6" fill="#c0c0c0" stroke="#000080" stroke-width="1.05"/><rect x="551.2" y="703.6" width="8" height="9" fill="#c0c0c0"/><polygon points="558.7,703.6 558.7,712.6 551.7,708.1" fill="none" stroke="#000080" stroke-width="1.05"/><line x1="551.7" y1="703.6" x2="551.7" y2="712.6" stroke="#000080" stroke-width="1.05"/><line x1="550.2" y1="708.1" x2="560.2" y2="708.1" stroke="#000080" stroke-width="1.05"/><polygon points="521.0,750.7 532.0,750.7 526.5,744.7" fill="none" stroke="#0000ff" stroke-width="1.05"/><rect x="521.5" y="771.5" width="10" height="5" fill="#c0c0c0"/><line x1="521.5" y1="772.2" x2="531.5" y2="772.2" stroke="#000080" stroke-width="1.05"/><path d="M521.5,777 Q526.5,774.5 531.5,777" fill="none" stroke="#000080" stroke-width="1.05"/><line x1="522.5" y1="769.5" x2="525.5" y2="769.5" stroke="#000080" stroke-width="1"/><line x1="524.0" y1="768" x2="524.0" y2="771" stroke="#000080" stroke-width="1"/><rect x="549.7" y="789.4" width="14.6" height="6" fill="#c0c0c0" stroke="#000080" stroke-width="1.05"/><polygon points="601.0,680.4 612.0,680.4 606.5,674.4" fill="none" stroke="#0000ff" stroke-width="1.05"/><rect x="603.5" y="684.4000000000001" width="6" height="14.6" fill="#c0c0c0" stroke="#000080" stroke-width="1.05"/><rect x="602.0" y="736.2" width="9" height="8" fill="#c0c0c0"/><polygon points="602.0,743.7 611.0,743.7 606.5,736.7" fill="none" stroke="#000080" stroke-width="1.05"/><line x1="602.0" y1="736.7" x2="611.0" y2="736.7" stroke="#000080" stroke-width="1.05"/><line x1="606.5" y1="735.2" x2="606.5" y2="745.2" stroke="#000080" stroke-width="1.05"/><line x1="611.0" y1="736.7" x2="613.0" y2="738.7" stroke="#000080" stroke-width="1.05"/><line x1="602.0" y1="736.7" x2="600.0" y2="734.7" stroke="#000080" stroke-width="1.05"/><rect x="685.5" y="733.2" width="14.6" height="6" fill="#c0c0c0" stroke="#000080" stroke-width="1.05"/><line x1="713.5" y1="727.3" x2="713.5" y2="745.1" stroke="#000080" stroke-width="1.4"/><line x1="713.5" y1="731.3" x2="727.3" y2="723.3" stroke="#000080" stroke-width="1.05"/><line x1="713.5" y1="741.1" x2="727.3" y2="749.1" stroke="#000080" stroke-width="1.05"/><polygon points="727.3,749.1 722.3,748.3000000000001 724.5,744.9" fill="none" stroke="#000080" stroke-width="1"/><rect x="724.3" y="764.2" width="6" height="14.6" fill="#c0c0c0" stroke="#000080" stroke-width="1.05"/><rect x="751.2" y="747.7" width="14.6" height="6" fill="#c0c0c0" stroke="#000080" stroke-width="1.05"/><line x1="781.1" y1="731" x2="781.1" y2="750.6" stroke="#000080" stroke-width="1.2"/><line x1="784.1" y1="728" x2="784.1" y2="734.5" stroke="#000080" stroke-width="1.05"/><line x1="784.1" y1="737.5" x2="784.1" y2="744.1" stroke="#000080" stroke-width="1.05"/><line x1="784.1" y1="747.1" x2="784.1" y2="753.6" stroke="#000080" stroke-width="1.05"/><line x1="784.1" y1="731" x2="793.3" y2="731" stroke="#000080" stroke-width="1.05"/><line x1="784.1" y1="750.6" x2="793.3" y2="750.6" stroke="#000080" stroke-width="1.05"/><line x1="784.1" y1="740.8" x2="790.3" y2="740.8" stroke="#000080" stroke-width="1.05"/><line x1="790.3" y1="740.8" x2="790.3" y2="738.3" stroke="#000080" stroke-width="1"/><line x1="790.3" y1="738.3" x2="793.3" y2="738.3" stroke="#000080" stroke-width="1"/><line x1="793.3" y1="738.3" x2="793.3" y2="750.6" stroke="#000080" stroke-width="1.05"/><polygon points="785.1,740.8 788.1,738.8 788.1,742.8" fill="none" stroke="#000080" stroke-width="1"/><rect x="790.3" y="773.4000000000001" width="6" height="14.6" fill="#c0c0c0" stroke="#000080" stroke-width="1.05"/><line x1="851" y1="731" x2="851" y2="750.6" stroke="#000080" stroke-width="1.2"/><line x1="854" y1="728" x2="854" y2="734.5" stroke="#000080" stroke-width="1.05"/><line x1="854" y1="737.5" x2="854" y2="744.1" stroke="#000080" stroke-width="1.05"/><line x1="854" y1="747.1" x2="854" y2="753.6" stroke="#000080" stroke-width="1.05"/><line x1="854" y1="731" x2="863.4" y2="731" stroke="#000080" stroke-width="1.05"/><line x1="854" y1="750.6" x2="863.4" y2="750.6" stroke="#000080" stroke-width="1.05"/><line x1="854" y1="740.8" x2="860.4" y2="740.8" stroke="#000080" stroke-width="1.05"/><line x1="860.4" y1="740.8" x2="860.4" y2="738.3" stroke="#000080" stroke-width="1"/><line x1="860.4" y1="738.3" x2="863.4" y2="738.3" stroke="#000080" stroke-width="1"/><line x1="863.4" y1="738.3" x2="863.4" y2="750.6" stroke="#000080" stroke-width="1.05"/><polygon points="855,740.8 858,738.8 858,742.8" fill="none" stroke="#000080" stroke-width="1"/><rect x="860.4" y="773.4000000000001" width="6" height="14.6" fill="#c0c0c0" stroke="#000080" stroke-width="1.05"/><rect x="823.6" y="717.7" width="6" height="14.6" fill="#c0c0c0" stroke="#000080" stroke-width="1.05"/><line x1="921" y1="731" x2="921" y2="750.6" stroke="#000080" stroke-width="1.2"/><line x1="924" y1="728" x2="924" y2="734.5" stroke="#000080" stroke-width="1.05"/><line x1="924" y1="737.5" x2="924" y2="744.1" stroke="#000080" stroke-width="1.05"/><line x1="924" y1="747.1" x2="924" y2="753.6" stroke="#000080" stroke-width="1.05"/><line x1="924" y1="731" x2="933.4" y2="731" stroke="#000080" stroke-width="1.05"/><line x1="924" y1="750.6" x2="933.4" y2="750.6" stroke="#000080" stroke-width="1.05"/><line x1="924" y1="740.8" x2="930.4" y2="740.8" stroke="#000080" stroke-width="1.05"/><line x1="930.4" y1="740.8" x2="930.4" y2="738.3" stroke="#000080" stroke-width="1"/><line x1="930.4" y1="738.3" x2="933.4" y2="738.3" stroke="#000080" stroke-width="1"/><line x1="933.4" y1="738.3" x2="933.4" y2="750.6" stroke="#000080" stroke-width="1.05"/><polygon points="925,740.8 928,738.8 928,742.8" fill="none" stroke="#000080" stroke-width="1"/><rect x="930.4" y="773.4000000000001" width="6" height="14.6" fill="#c0c0c0" stroke="#000080" stroke-width="1.05"/><rect x="898.4" y="717.7" width="6" height="14.6" fill="#c0c0c0" stroke="#000080" stroke-width="1.05"/><line x1="987.1" y1="731" x2="987.1" y2="750.6" stroke="#000080" stroke-width="1.2"/><line x1="990.1" y1="728" x2="990.1" y2="734.5" stroke="#000080" stroke-width="1.05"/><line x1="990.1" y1="737.5" x2="990.1" y2="744.1" stroke="#000080" stroke-width="1.05"/><line x1="990.1" y1="747.1" x2="990.1" y2="753.6" stroke="#000080" stroke-width="1.05"/><line x1="990.1" y1="731" x2="999.3" y2="731" stroke="#000080" stroke-width="1.05"/><line x1="990.1" y1="750.6" x2="999.3" y2="750.6" stroke="#000080" stroke-width="1.05"/><line x1="990.1" y1="740.8" x2="996.3" y2="740.8" stroke="#000080" stroke-width="1.05"/><line x1="996.3" y1="740.8" x2="996.3" y2="738.3" stroke="#000080" stroke-width="1"/><line x1="996.3" y1="738.3" x2="999.3" y2="738.3" stroke="#000080" stroke-width="1"/><line x1="999.3" y1="738.3" x2="999.3" y2="750.6" stroke="#000080" stroke-width="1.05"/><polygon points="991.1,740.8 994.1,738.8 994.1,742.8" fill="none" stroke="#000080" stroke-width="1"/><rect x="996.3" y="773.4000000000001" width="6" height="14.6" fill="#c0c0c0" stroke="#000080" stroke-width="1.05"/><rect x="963.5" y="717.7" width="6" height="14.6" fill="#c0c0c0" stroke="#000080" stroke-width="1.05"/><rect x="1036.4" y="640.8" width="10" height="4.4" fill="#c0c0c0"/><line x1="1036.4" y1="641.5" x2="1046.4" y2="641.5" stroke="#000080" stroke-width="1.05"/><line x1="1036.4" y1="644.5" x2="1046.4" y2="644.5" stroke="#000080" stroke-width="1.05"/><rect x="1038.4" y="661.7" width="6" height="14.6" fill="#c0c0c0" stroke="#000080" stroke-width="1.05"/><polygon points="1035.9,689.8 1046.9,689.8 1041.4,695.8" fill="none" stroke="#0000ff" stroke-width="1.05"/><rect x="1064.3" y="650.0" width="10" height="4.4" fill="#c0c0c0"/><line x1="1064.3" y1="650.7" x2="1074.3" y2="650.7" stroke="#000080" stroke-width="1.05"/><line x1="1064.3" y1="653.7" x2="1074.3" y2="653.7" stroke="#000080" stroke-width="1.05"/><rect x="1120.5" y="635.2" width="14.6" height="6" fill="#c0c0c0" stroke="#000080" stroke-width="1.05"/><rect x="1115" y="609.3" width="26" height="8" fill="#c0c0c0"/><path d="M1115,615.3 C1115.0,607.3 1125.6666666666667,607.3 1123.6666666666667,615.3 C1123.6666666666667,607.3 1134.3333333333335,607.3 1132.3333333333335,615.3 C1132.3333333333333,607.3 1143.0,607.3 1141.0,615.3" fill="none" stroke="#000080" stroke-width="1.05"/><rect x="1087.7" y="668.3" width="14.6" height="6" fill="#c0c0c0" stroke="#000080" stroke-width="1.05"/><rect x="1120.5" y="668.3" width="14.6" height="6" fill="#c0c0c0" stroke="#000080" stroke-width="1.05"/><rect x="1185.5" y="668.3" width="14.6" height="6" fill="#c0c0c0" stroke="#000080" stroke-width="1.05"/><rect x="1239.2" y="684.4000000000001" width="6" height="14.6" fill="#c0c0c0" stroke="#000080" stroke-width="1.05"/><polygon points="1236.7,713.2 1247.7,713.2 1242.2,719.2" fill="none" stroke="#0000ff" stroke-width="1.05"/><rect x="1185.5" y="691.1" width="14.6" height="6" fill="#c0c0c0" stroke="#000080" stroke-width="1.05"/><rect x="1064.3" y="560.9" width="10" height="5" fill="#c0c0c0"/><line x1="1064.3" y1="561.6" x2="1074.3" y2="561.6" stroke="#000080" stroke-width="1.05"/><path d="M1064.3,566.4 Q1069.3,563.9 1074.3,566.4" fill="none" stroke="#000080" stroke-width="1.05"/><line x1="1065.3" y1="558.9" x2="1068.3" y2="558.9" stroke="#000080" stroke-width="1"/><line x1="1066.8" y1="557.4" x2="1066.8" y2="560.4" stroke="#000080" stroke-width="1"/><circle cx="1200.4" cy="499.7" r="9" fill="#c0c0c0" stroke="#000080" stroke-width="1.05"/><line x1="1196.4" y1="495.2" x2="1204.4" y2="495.2" stroke="#000080" stroke-width="1.05"/><line x1="1200.4" y1="491.2" x2="1200.4" y2="499.2" stroke="#000080" stroke-width="1.05"/><line x1="1196.4" y1="505.7" x2="1204.4" y2="505.7" stroke="#000080" stroke-width="1.05"/><circle cx="1200.4" cy="556" r="9" fill="#c0c0c0" stroke="#000080" stroke-width="1.05"/><line x1="1196.4" y1="551.5" x2="1204.4" y2="551.5" stroke="#000080" stroke-width="1.05"/><line x1="1200.4" y1="547.5" x2="1200.4" y2="555.5" stroke="#000080" stroke-width="1.05"/><line x1="1196.4" y1="562" x2="1204.4" y2="562" stroke="#000080" stroke-width="1.05"/><polygon points="1126.3,529.8 1126.3,540.8 1120.3,535.3" fill="none" stroke="#0000ff" stroke-width="1.05"/><rect x="1143.6" y="501.3" width="10" height="4.4" fill="#c0c0c0"/><line x1="1143.6" y1="502.0" x2="1153.6" y2="502.0" stroke="#000080" stroke-width="1.05"/><line x1="1143.6" y1="505.0" x2="1153.6" y2="505.0" stroke="#000080" stroke-width="1.05"/><rect x="1167.4" y="504.5" width="10" height="5" fill="#c0c0c0"/><line x1="1167.4" y1="505.2" x2="1177.4" y2="505.2" stroke="#000080" stroke-width="1.05"/><path d="M1167.4,510 Q1172.4,507.5 1177.4,510" fill="none" stroke="#000080" stroke-width="1.05"/><line x1="1168.4" y1="502.5" x2="1171.4" y2="502.5" stroke="#000080" stroke-width="1"/><line x1="1169.9" y1="501" x2="1169.9" y2="504" stroke="#000080" stroke-width="1"/><rect x="1143.6" y="561.4" width="10" height="4.4" fill="#c0c0c0"/><line x1="1143.6" y1="562.1" x2="1153.6" y2="562.1" stroke="#000080" stroke-width="1.05"/><line x1="1143.6" y1="565.1" x2="1153.6" y2="565.1" stroke="#000080" stroke-width="1.05"/><rect x="1167.4" y="564.0" width="10" height="5" fill="#c0c0c0"/><line x1="1167.4" y1="564.7" x2="1177.4" y2="564.7" stroke="#000080" stroke-width="1.05"/><path d="M1167.4,569.5 Q1172.4,567.0 1177.4,569.5" fill="none" stroke="#000080" stroke-width="1.05"/><line x1="1168.4" y1="562.0" x2="1171.4" y2="562.0" stroke="#000080" stroke-width="1"/><line x1="1169.9" y1="560.5" x2="1169.9" y2="563.5" stroke="#000080" stroke-width="1"/><rect x="220.0" y="530.3" width="5" height="10" fill="#c0c0c0"/><line x1="220.7" y1="530.3" x2="220.7" y2="540.3" stroke="#000080" stroke-width="1.05"/><path d="M225.5,530.3 Q223.0,535.3 225.5,540.3" fill="none" stroke="#000080" stroke-width="1.05"/><line x1="217.0" y1="538.8" x2="220.0" y2="538.8" stroke="#000080" stroke-width="1"/><line x1="218.5" y1="537.3" x2="218.5" y2="540.3" stroke="#000080" stroke-width="1"/><rect x="89.7" y="636.2" width="3.6" height="3.6" fill="#0000ff"/><rect x="160.79999999999998" y="636.2" width="3.6" height="3.6" fill="#0000ff"/><rect x="178.79999999999998" y="636.2" width="3.6" height="3.6" fill="#0000ff"/><text x="28" y="650.5" class="s" text-anchor="start">V4</text><text x="49" y="631.5" class="s" text-anchor="start">R26</text><text x="50" y="649.5" class="s" text-anchor="start">750</text><text x="29" y="672" class="s" text-anchor="start">SINE(0 1.5 19k)</text><text x="29" y="683.5" class="s" text-anchor="start">V1</text><text x="29" y="704" class="s" text-anchor="start">SINE(0 1.5 20k)</text><text x="28" y="714" class="s" text-anchor="start">AC 1 1</text><text x="28" y="722.5" class="s" text-anchor="start">Rser=20</text><text x="94" y="651" class="s" text-anchor="start">C7</text><text x="94" y="666" class="s" text-anchor="start">470p</text><text x="117" y="630.6" class="s" text-anchor="start">R1</text><text x="115" y="648.8" class="s" text-anchor="start">9.1k</text><text x="167" y="650" class="s" text-anchor="start">R23</text><text x="167" y="661" class="s" text-anchor="start">400</text><text x="165" y="676.1" class="s" text-anchor="start">C1</text><text x="174" y="688.2" class="s" text-anchor="start">1n</text><rect x="178.79999999999998" y="758.0" width="3.6" height="3.6" fill="#0000ff"/><rect x="178.79999999999998" y="804.6" width="3.6" height="3.6" fill="#0000ff"/><text x="185" y="777" class="s" text-anchor="start">R5</text><text x="185" y="788" class="s" text-anchor="start">20k</text><text x="199" y="752" class="s" text-anchor="start">C6</text><text x="200" y="771" class="s" text-anchor="start">5p</text><rect x="220.79999999999998" y="804.6" width="3.6" height="3.6" fill="#0000ff"/><text x="143" y="800" class="s" text-anchor="start">R34</text><text x="143" y="815" class="s" text-anchor="start">1.2k</text><text x="194" y="800" class="s" text-anchor="start">R20</text><text x="195" y="815" class="s" text-anchor="start">9.1k</text><text x="90" y="717" class="s" text-anchor="start">;op</text><text x="73" y="729" class="s" text-anchor="start">;ac dec 101 0.1 0.5g</text><text x="75" y="740" class="s" text-anchor="start">.tran 0 40ms 20ms 30n</text><text x="75" y="752" class="s" text-anchor="start">.four 20k 20 v(OUT)</text><text x="75" y="762" class="s" text-anchor="start">.OPTIONS numdgt=7</text><text x="70" y="771.5" class="s" text-anchor="start">.OPTIONS plotwinsize=0</text><rect x="155.6" y="608.6" width="3.6" height="3.6" fill="#0000ff"/><rect x="192.89999999999998" y="608.6" width="3.6" height="3.6" fill="#0000ff"/><rect x="230.6" y="608.6" width="3.6" height="3.6" fill="#0000ff"/><text x="134" y="603.1" class="s" text-anchor="start">R27</text><text x="135" y="621" class="s" text-anchor="start">100</text><text x="163" y="610.4" class="s" text-anchor="start">D7</text><text x="163" y="618.7" class="s" text-anchor="start">1N4148</text><text x="213" y="602.8" class="s" text-anchor="start">D8</text><text x="205" y="621" class="s" text-anchor="start">1N4148</text><text x="166" y="567" class="s" text-anchor="start">R33</text><text x="182" y="569.8" class="s" text-anchor="start">1k</text><rect x="192.89999999999998" y="584.4000000000001" width="3.6" height="3.6" fill="#0000ff"/><text x="163" y="583.8" class="s" text-anchor="start">D6</text><text x="164.7" y="593.8" class="s" text-anchor="start">1N4148</text><text x="213" y="579.8" class="s" text-anchor="start">D5</text><text x="205" y="596.8" class="s" text-anchor="start">1N4148</text><rect x="230.6" y="631.7" width="3.6" height="3.6" fill="#0000ff"/><text x="208" y="625.8" class="s" text-anchor="start">U1</text><text x="208" y="645.2" class="s" text-anchor="start">LT318A</text><text x="246" y="627.9" class="s" text-anchor="start">R57</text><text x="249" y="641.7" class="s" text-anchor="start">47</text><rect x="244.79999999999998" y="482.5" width="3.6" height="3.6" fill="#0000ff"/><text x="260" y="477" class="s" text-anchor="start">R24</text><text x="260" y="494" class="s" text-anchor="start">2.7k</text><text x="230" y="504" class="s" text-anchor="start">D13</text><text x="204.6" y="523" class="s" text-anchor="start">BZX384B15</text><rect x="202.5" y="533.5" width="3.6" height="3.6" fill="#0000ff"/><rect x="244.79999999999998" y="533.5" width="3.6" height="3.6" fill="#0000ff"/><text x="221" y="529" class="s" text-anchor="start">C9</text><text x="214" y="546" class="s" text-anchor="start">470µ</text><rect x="202.5" y="556.5" width="3.6" height="3.6" fill="#0000ff"/><rect x="244.79999999999998" y="556.5" width="3.6" height="3.6" fill="#0000ff"/><text x="214" y="552" class="s" text-anchor="start">C15</text><text x="215" y="569" class="s" text-anchor="start">0.1µ</text><rect x="244.79999999999998" y="739.4000000000001" width="3.6" height="3.6" fill="#0000ff"/><rect x="202.6" y="673.7" width="3.6" height="3.6" fill="#0000ff"/><rect x="244.39999999999998" y="673.7" width="3.6" height="3.6" fill="#0000ff"/><text x="215" y="669.1" class="s" text-anchor="start">C14</text><text x="215" y="685.3" class="s" text-anchor="start">0.1µ</text><rect x="202.5" y="697.7" width="3.6" height="3.6" fill="#0000ff"/><rect x="244.79999999999998" y="697.7" width="3.6" height="3.6" fill="#0000ff"/><text x="215" y="691.3" class="s" text-anchor="start">C10</text><text x="214" y="708.7" class="s" text-anchor="start">470µ</text><text x="229" y="708.7" class="s" text-anchor="start">D14</text><text x="204" y="728.7" class="s" text-anchor="start">BZX384B15</text><text x="246" y="742.6" class="s" text-anchor="start">2N5551_Cordell</text><text x="265" y="786" class="s" text-anchor="start">R29</text><text x="265" y="802.5" class="s" text-anchor="start">2.7k</text><rect x="478.5" y="519.5" width="3.6" height="3.6" fill="#0000ff"/><rect x="286.59999999999997" y="659.7" width="3.6" height="3.6" fill="#0000ff"/><text x="281" y="630.6" class="s" text-anchor="start">Q1</text><text x="280" y="638.5" class="s" text-anchor="start">2SC3503_Cordell</text><text x="293" y="681.3" class="s" text-anchor="start">R7</text><text x="292" y="690" class="s" text-anchor="start">82</text><rect x="347.5" y="482.5" width="3.6" height="3.6" fill="#0000ff"/><rect x="347.5" y="659.7" width="3.6" height="3.6" fill="#0000ff"/><text x="351" y="606.8" class="s" text-anchor="start">Q2</text><text x="350" y="615.8" class="s" text-anchor="start">2SC3503_Cordell</text><text x="372" y="627.4" class="s" text-anchor="start">R56</text><text x="375" y="641.2" class="s" text-anchor="start">47</text><text x="353" y="681.3" class="s" text-anchor="start">R25</text><text x="352" y="690" class="s" text-anchor="start">82</text><text x="297" y="655.5" class="s" text-anchor="start">R55</text><text x="300" y="669.4" class="s" text-anchor="start">51</text><text x="324" y="655.5" class="s" text-anchor="start">L2</text><text x="320" y="671.5" class="s" text-anchor="start">100µ</text><rect x="286.8" y="697.7" width="3.6" height="3.6" fill="#0000ff"/><rect x="305.59999999999997" y="697.7" width="3.6" height="3.6" fill="#0000ff"/><text x="265" y="674.5" class="s" text-anchor="start">C13</text><text x="267" y="688.5" class="s" text-anchor="start">2n</text><rect x="305.59999999999997" y="790.6" width="3.6" height="3.6" fill="#0000ff"/><rect x="356.7" y="743.7" width="3.6" height="3.6" fill="#0000ff"/><rect x="356.7" y="790.6" width="3.6" height="3.6" fill="#0000ff"/><text x="311" y="711.3" class="s" text-anchor="start">R41</text><text x="311" y="722.6" class="s" text-anchor="start">3.6k</text><text x="303" y="741.7" class="s" text-anchor="start">Q14</text><text x="311" y="779.4" class="s" text-anchor="start">R3</text><text x="309" y="789.5" class="s" text-anchor="start">51</text><text x="335" y="740.8" class="s" text-anchor="start">R54</text><text x="338" y="753.8" class="s" text-anchor="start">47</text><text x="369" y="740.8" class="s" text-anchor="start">R19</text><text x="383" y="753.8" class="s" text-anchor="start">12k</text><text x="360" y="751.6" class="s" text-anchor="start">D10</text><text x="363" y="762.5" class="s" text-anchor="start">1N4148</text><text x="360" y="770.4" class="s" text-anchor="start">D9</text><text x="363" y="780.8" class="s" text-anchor="start">1N4148</text><rect x="379.7" y="482.5" width="3.6" height="3.6" fill="#0000ff"/><rect x="417.8" y="482.5" width="3.6" height="3.6" fill="#0000ff"/><rect x="417.8" y="552.8000000000001" width="3.6" height="3.6" fill="#0000ff"/><text x="384" y="495.1" class="s" text-anchor="start">D20</text><text x="384.6" y="514.1" class="s" text-anchor="start">1N4148</text><text x="384" y="532.1" class="s" text-anchor="start">D21</text><text x="384.6" y="550.9" class="s" text-anchor="start">1N4148</text><text x="421" y="497" class="s" text-anchor="start">C11</text><text x="421" y="511" class="s" text-anchor="start">100n</text><text x="438" y="549" class="s" text-anchor="start">R28</text><text x="441" y="562.5" class="s" text-anchor="start">47</text><rect x="478.5" y="482.5" width="3.6" height="3.6" fill="#0000ff"/><rect x="478.5" y="575.5" width="3.6" height="3.6" fill="#0000ff"/><rect x="478.5" y="650.6" width="3.6" height="3.6" fill="#0000ff"/><rect x="478.5" y="678.6" width="3.6" height="3.6" fill="#0000ff"/><rect x="604.4000000000001" y="552.8000000000001" width="3.6" height="3.6" fill="#0000ff"/><text x="484" y="496.7" class="s" text-anchor="start">R8</text><text x="484" y="507.8" class="s" text-anchor="start">82</text><text x="485.4" y="549.5" class="s" text-anchor="start">2SA1381_Cordell</text><text x="485" y="559.3" class="s" text-anchor="start">Q16</text><text x="552" y="546.6" class="s" text-anchor="start">D17</text><text x="565" y="546.6" class="s" text-anchor="start">BZX384B11</text><text x="547" y="563.3" class="s" text-anchor="start">1N4148</text><rect x="515.6" y="482.5" width="3.6" height="3.6" fill="#0000ff"/><rect x="604.4000000000001" y="482.5" width="3.6" height="3.6" fill="#0000ff"/><text x="519" y="496.7" class="s" text-anchor="start">C2</text><text x="520" y="510.6" class="s" text-anchor="start">1000µ</text><text x="533" y="476.9" class="s" text-anchor="start">R2</text><text x="533" y="493.5" class="s" text-anchor="start">100</text><text x="591" y="527.6" class="s" text-anchor="start">D18</text><text x="610" y="567.1" class="s" text-anchor="start">R51</text><text x="610" y="577.4" class="s" text-anchor="start">3k</text><rect x="637.4000000000001" y="444.4" width="3.6" height="3.6" fill="#0000ff"/><rect x="674.7" y="444.4" width="3.6" height="3.6" fill="#0000ff"/><rect x="702.8000000000001" y="444.4" width="3.6" height="3.6" fill="#0000ff"/><rect x="791.7" y="444.4" width="3.6" height="3.6" fill="#0000ff"/><rect x="637.4000000000001" y="500.4" width="3.6" height="3.6" fill="#0000ff"/><text x="641" y="452.6" class="s" text-anchor="start">D2</text><text x="641" y="471.6" class="s" text-anchor="start">1N4148</text><text x="641" y="480.8" class="s" text-anchor="start">D12</text><text x="641" y="499.9" class="s" text-anchor="start">B520C</text><text x="643" y="520.5" class="s" text-anchor="start">R21</text><text x="643" y="530.8" class="s" text-anchor="start">15k</text><rect x="674.7" y="500.4" width="3.6" height="3.6" fill="#0000ff"/><rect x="702.8000000000001" y="500.4" width="3.6" height="3.6" fill="#0000ff"/><text x="678" y="459.4" class="s" text-anchor="start">C18</text><text x="678" y="473.7" class="s" text-anchor="start">1000µ</text><text x="706" y="468.5" class="s" text-anchor="start">C21</text><text x="706" y="482.7" class="s" text-anchor="start">0.22µ</text><text x="723" y="495.9" class="s" text-anchor="start">R12</text><text x="724" y="512.5" class="s" text-anchor="start">100</text><rect x="791.7" y="486.59999999999997" width="3.6" height="3.6" fill="#0000ff"/><rect x="768.2" y="533.7" width="3.6" height="3.6" fill="#0000ff"/><rect x="791.7" y="552.8000000000001" width="3.6" height="3.6" fill="#0000ff"/><text x="775.6" y="497.8" class="s" text-anchor="start">2SA1381_Cordell</text><text x="775" y="508.6" class="s" text-anchor="start">Q5</text><text x="798" y="464.6" class="s" text-anchor="start">R11</text><text x="797" y="474.8" class="s" text-anchor="start">0.22</text><text x="833" y="501.4" class="s" text-anchor="start">C19</text><text x="833" y="515.7" class="s" text-anchor="start">0.1µ</text><rect x="674.7" y="566.7" width="3.6" height="3.6" fill="#0000ff"/><rect x="674.7" y="622.6" width="3.6" height="3.6" fill="#0000ff"/><text x="690" y="530" class="s" text-anchor="start">R22</text><text x="691" y="543.5" class="s" text-anchor="start">560</text><rect x="730.2" y="580.5" width="3.6" height="3.6" fill="#0000ff"/><rect x="740.5" y="580.5" width="3.6" height="3.6" fill="#0000ff"/><text x="690" y="562.8" class="s" text-anchor="start">R15</text><text x="694" y="576.7" class="s" text-anchor="start">12</text><text x="730" y="564.3" class="s" text-anchor="start">Q6 2SC4793</text><text x="751" y="576.7" class="s" text-anchor="start">R14</text><text x="755" y="590.2" class="s" text-anchor="start">51</text><text x="737" y="599.7" class="s" text-anchor="start">R13</text><text x="737" y="610.3" class="s" text-anchor="start">100</text><text x="678" y="573.5" class="s" text-anchor="start">D19</text><text x="678" y="592.6" class="s" text-anchor="start">LedBLUE</text><text x="678" y="602.4" class="s" text-anchor="start">D22</text><text x="678" y="620.8" class="s" text-anchor="start">1N4148</text><rect x="791.7" y="617.4000000000001" width="3.6" height="3.6" fill="#0000ff"/><text x="795.0" y="569.6" class="s" text-anchor="start">M1</text><text x="795.0" y="580.7" class="s" text-anchor="start">irfp240C</text><text x="797.0" y="604.5" class="s" text-anchor="start">R40</text><text x="797.0" y="614.8" class="s" text-anchor="start">0.22</text><rect x="861.5" y="617.4000000000001" width="3.6" height="3.6" fill="#0000ff"/><rect x="861.5" y="552.7" width="3.6" height="3.6" fill="#0000ff"/><text x="864.8" y="569.6" class="s" text-anchor="start">M2</text><text x="864.8" y="580.7" class="s" text-anchor="start">irfp240C</text><text x="866.8" y="604.5" class="s" text-anchor="start">R42</text><text x="866.8" y="614.8" class="s" text-anchor="start">0.22</text><text x="834.8" y="599.7" class="s" text-anchor="start">R47</text><text x="834.8" y="610.3" class="s" text-anchor="start">51</text><rect x="828.5" y="636.8000000000001" width="3.6" height="3.6" fill="#0000ff"/><rect x="931.6" y="617.4000000000001" width="3.6" height="3.6" fill="#0000ff"/><rect x="931.6" y="552.7" width="3.6" height="3.6" fill="#0000ff"/><text x="934.9" y="569.6" class="s" text-anchor="start">M3</text><text x="934.9" y="580.7" class="s" text-anchor="start">irfp240C</text><text x="936.9" y="604.5" class="s" text-anchor="start">R43</text><text x="936.9" y="614.8" class="s" text-anchor="start">0.22</text><text x="905.7" y="599.7" class="s" text-anchor="start">R48</text><text x="905.7" y="610.3" class="s" text-anchor="start">51</text><rect x="899.4000000000001" y="636.8000000000001" width="3.6" height="3.6" fill="#0000ff"/><rect x="997.7" y="617.4000000000001" width="3.6" height="3.6" fill="#0000ff"/><text x="1001.0" y="569.6" class="s" text-anchor="start">M7</text><text x="1001.0" y="580.7" class="s" text-anchor="start">irfp240C</text><text x="1003.0" y="604.5" class="s" text-anchor="start">R58</text><text x="1003.0" y="614.8" class="s" text-anchor="start">0.22</text><text x="970.7" y="599.7" class="s" text-anchor="start">R60</text><text x="970.7" y="610.3" class="s" text-anchor="start">51</text><rect x="791.7" y="617.4000000000001" width="3.6" height="3.6" fill="#0000ff"/><rect x="646.6" y="650.7" width="3.6" height="3.6" fill="#0000ff"/><rect x="674.6" y="734.4000000000001" width="3.6" height="3.6" fill="#0000ff"/><rect x="674.6" y="790.6" width="3.6" height="3.6" fill="#0000ff"/><text x="655" y="616.4" class="s" text-anchor="start">D11</text><text x="650" y="634.6" class="s" text-anchor="start">1N4148</text><text x="682" y="647.8" class="s" text-anchor="start">2SA1381_Cordell</text><text x="682" y="658.4" class="s" text-anchor="start">Q3</text><rect x="496.59999999999997" y="631.5" width="3.6" height="3.6" fill="#0000ff"/><rect x="496.59999999999997" y="650.6" width="3.6" height="3.6" fill="#0000ff"/><text x="485" y="610" class="s" text-anchor="start">R6</text><text x="482" y="620" class="s" text-anchor="start">1e6</text><text x="515" y="610" class="s" text-anchor="start">C3</text><text x="508" y="623.8" class="s" text-anchor="start">100p</text><rect x="417.8" y="734.4000000000001" width="3.6" height="3.6" fill="#0000ff"/><rect x="431.7" y="734.4000000000001" width="3.6" height="3.6" fill="#0000ff"/><rect x="417.8" y="790.6" width="3.6" height="3.6" fill="#0000ff"/><rect x="431.7" y="790.6" width="3.6" height="3.6" fill="#0000ff"/><rect x="478.8" y="790.6" width="3.6" height="3.6" fill="#0000ff"/><rect x="524.7" y="790.6" width="3.6" height="3.6" fill="#0000ff"/><text x="405" y="711.9" class="s" text-anchor="start">R9</text><text x="402" y="723" class="s" text-anchor="start">22k</text><text x="438" y="730.9" class="s" text-anchor="start">R35</text><text x="441" y="744.8" class="s" text-anchor="start">47</text><text x="470" y="732.3" class="s" text-anchor="start">Q4</text><text x="475" y="741.6" class="s" text-anchor="start">1N4148</text><text x="460" y="758" class="s" text-anchor="start">2SC3503_Cordell</text><text x="403" y="754" class="s" text-anchor="start">C12</text><text x="400" y="768.5" class="s" text-anchor="start">100n</text><text x="422" y="756.6" class="s" text-anchor="start">D1</text><text x="406" y="775.4" class="s" text-anchor="start">1N4148</text><text x="421" y="775.4" class="s" text-anchor="start">D3</text><text x="462" y="768.5" class="s" text-anchor="start">R10</text><text x="462" y="778.4" class="s" text-anchor="start">100</text><text x="529" y="768.5" class="s" text-anchor="start">C22</text><text x="529" y="781.8" class="s" text-anchor="start">1000µ</text><text x="550" y="786.3" class="s" text-anchor="start">R31</text><text x="551" y="799.6" class="s" text-anchor="start">100</text><text x="547" y="700.6" class="s" text-anchor="start">D19</text><text x="542" y="718.4" class="s" text-anchor="start">1N4148</text><rect x="604.7" y="706.3000000000001" width="3.6" height="3.6" fill="#0000ff"/><rect x="604.7" y="790.6" width="3.6" height="3.6" fill="#0000ff"/><text x="611" y="688.7" class="s" text-anchor="start">R52</text><text x="611" y="699.2" class="s" text-anchor="start">3k</text><text x="592" y="732.3" class="s" text-anchor="start">D18</text><text x="565" y="751.5" class="s" text-anchor="start">BZX384B10</text><rect x="791.5" y="720.6" width="3.6" height="3.6" fill="#0000ff"/><rect x="725.5" y="790.6" width="3.6" height="3.6" fill="#0000ff"/><rect x="725.5" y="748.9000000000001" width="3.6" height="3.6" fill="#0000ff"/><rect x="740.6" y="748.9000000000001" width="3.6" height="3.6" fill="#0000ff"/><text x="686" y="730.9" class="s" text-anchor="start">R17</text><text x="689" y="744.8" class="s" text-anchor="start">12</text><text x="725" y="732.3" class="s" text-anchor="start">Q7</text><text x="741" y="732.3" class="s" text-anchor="start">2SC4793</text><text x="681" y="768.5" class="s" text-anchor="start">R4</text><text x="681" y="778.4" class="s" text-anchor="start">560</text><text x="732" y="768.5" class="s" text-anchor="start">R18</text><text x="732" y="778.4" class="s" text-anchor="start">100</text><text x="751" y="744.4" class="s" text-anchor="start">R16</text><text x="755" y="758.8" class="s" text-anchor="start">51</text><rect x="791.5" y="790.6" width="3.6" height="3.6" fill="#0000ff"/><text x="794.8" y="737.7" class="s" text-anchor="start">M4</text><text x="794.8" y="750" class="s" text-anchor="start">irfp240C</text><text x="796.8" y="777.7" class="s" text-anchor="start">R44</text><text x="796.8" y="787.7" class="s" text-anchor="start">0.22</text><rect x="861.6" y="790.6" width="3.6" height="3.6" fill="#0000ff"/><text x="864.9" y="737.7" class="s" text-anchor="start">M5</text><text x="864.9" y="750" class="s" text-anchor="start">irfp240C</text><text x="866.9" y="777.7" class="s" text-anchor="start">R45</text><text x="866.9" y="787.7" class="s" text-anchor="start">0.22</text><text x="830.1" y="721.7" class="s" text-anchor="start">R49</text><text x="830.1" y="731.5" class="s" text-anchor="start">51</text><rect x="824.8000000000001" y="701.4000000000001" width="3.6" height="3.6" fill="#0000ff"/><rect x="931.6" y="790.6" width="3.6" height="3.6" fill="#0000ff"/><text x="934.9" y="737.7" class="s" text-anchor="start">M6</text><text x="934.9" y="750" class="s" text-anchor="start">irfp240C</text><text x="936.9" y="777.7" class="s" text-anchor="start">R46</text><text x="936.9" y="787.7" class="s" text-anchor="start">0.22</text><text x="904.9" y="721.7" class="s" text-anchor="start">R50</text><text x="904.9" y="731.5" class="s" text-anchor="start">51</text><rect x="899.6" y="701.4000000000001" width="3.6" height="3.6" fill="#0000ff"/><rect x="997.5" y="790.6" width="3.6" height="3.6" fill="#0000ff"/><text x="1000.8" y="737.7" class="s" text-anchor="start">M8</text><text x="1000.8" y="750" class="s" text-anchor="start">irfp240C</text><text x="1002.8" y="777.7" class="s" text-anchor="start">R59</text><text x="1002.8" y="787.7" class="s" text-anchor="start">0.22</text><text x="970.0" y="721.7" class="s" text-anchor="start">R61</text><text x="970.0" y="731.5" class="s" text-anchor="start">51</text><rect x="1039.6000000000001" y="617.4000000000001" width="3.6" height="3.6" fill="#0000ff"/><rect x="1067.5" y="617.4000000000001" width="3.6" height="3.6" fill="#0000ff"/><rect x="1067.5" y="636.4000000000001" width="3.6" height="3.6" fill="#0000ff"/><rect x="1067.5" y="669.5" width="3.6" height="3.6" fill="#0000ff"/><rect x="1104.4" y="636.4000000000001" width="3.6" height="3.6" fill="#0000ff"/><rect x="1146.6000000000001" y="636.4000000000001" width="3.6" height="3.6" fill="#0000ff"/><rect x="1109.6000000000001" y="669.5" width="3.6" height="3.6" fill="#0000ff"/><rect x="1146.6000000000001" y="669.5" width="3.6" height="3.6" fill="#0000ff"/><rect x="1217.6000000000001" y="669.5" width="3.6" height="3.6" fill="#0000ff"/><text x="1043" y="637.6" class="s" text-anchor="start">C24</text><text x="1043" y="651.7" class="s" text-anchor="start">0.1µ</text><text x="1045" y="665.6" class="s" text-anchor="start">R32</text><text x="1045" y="675.5" class="s" text-anchor="start">10</text><text x="1071" y="646.9" class="s" text-anchor="start">C20</text><text x="1071" y="660.4" class="s" text-anchor="start">5.1n</text><text x="1123" y="607.6" class="s" text-anchor="start">L3</text><text x="1122" y="623.5" class="s" text-anchor="start">3µ</text><text x="1121" y="630.4" class="s" text-anchor="start">R36</text><text x="1124" y="648.6" class="s" text-anchor="start">10</text><text x="1088" y="665.6" class="s" text-anchor="start">R37</text><text x="1089" y="679.6" class="s" text-anchor="start">910</text><text x="1121" y="665.6" class="s" text-anchor="start">R39</text><text x="1124" y="679.6" class="s" text-anchor="start">51</text><text x="1186" y="665.6" class="s" text-anchor="start">R38</text><text x="1188" y="679.6" class="s" text-anchor="start">0.1</text><text x="1227" y="668.7" class="s" text-anchor="start">Out</text><text x="1186" y="688.3" class="s" text-anchor="start">R63</text><text x="1188" y="702.4" class="s" text-anchor="start">0.1</text><text x="1244" y="688.3" class="s" text-anchor="start">R30</text><text x="1244" y="699.3" class="s" text-anchor="start">4</text><text x="1071" y="557.6" class="s" text-anchor="start">C17</text><text x="1071" y="570.9" class="s" text-anchor="start">4700µ</text><rect x="1146.8" y="482.8" width="3.6" height="3.6" fill="#0000ff"/><rect x="1170.6000000000001" y="482.8" width="3.6" height="3.6" fill="#0000ff"/><rect x="1146.8" y="533.5" width="3.6" height="3.6" fill="#0000ff"/><rect x="1170.6000000000001" y="533.5" width="3.6" height="3.6" fill="#0000ff"/><rect x="1198.6000000000001" y="533.5" width="3.6" height="3.6" fill="#0000ff"/><rect x="1170.6000000000001" y="580.1" width="3.6" height="3.6" fill="#0000ff"/><text x="1207" y="489.7" class="s" text-anchor="start">V2</text><text x="1151" y="497" class="s" text-anchor="start">C16</text><text x="1151" y="510.9" class="s" text-anchor="start">2.2µ</text><text x="1174" y="501.8" class="s" text-anchor="start">C8</text><text x="1174" y="516.2" class="s" text-anchor="start">22000µ</text><text x="1207" y="516.7" class="s" text-anchor="start">Rser=0.05</text><text x="1207" y="526.6" class="s" text-anchor="start">80</text><text x="1207" y="545.6" class="s" text-anchor="start">V3</text><text x="1151" y="558" class="s" text-anchor="start">C4</text><text x="1151" y="571.5" class="s" text-anchor="start">2.2µ</text><text x="1174" y="558" class="s" text-anchor="start">C5</text><text x="1174" y="571.5" class="s" text-anchor="start">22000µ</text><text x="1207" y="570.5" class="s" text-anchor="start">Rser=0.05</text><text x="1207" y="578.3" class="s" text-anchor="start">80</text></g>
</svg>
</body></html>
